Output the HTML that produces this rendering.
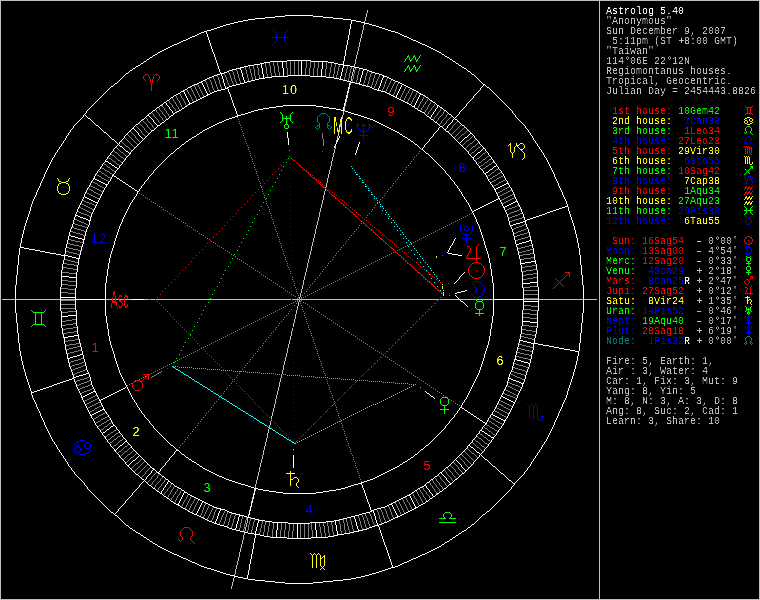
<!DOCTYPE html><html><head><meta charset="utf-8"><title>Astrolog 5.40</title><style>
html,body{margin:0;padding:0;background:#000;width:760px;height:600px;overflow:hidden}
svg{position:absolute;left:0;top:0;display:block}
.sb{position:absolute;left:606px;top:0;width:154px;height:600px;overflow:hidden;font-family:"Liberation Mono",monospace;font-size:10px;line-height:10px;color:#bfbfbf;filter:url(#th)}
.sb div{height:10px;position:relative;top:7px}
.sb span{position:absolute;top:0;white-space:pre}
.sb i{font-style:normal;position:relative;left:0.5px}
.sb b{font-weight:normal;display:inline-block;transform:scaleX(1.7)}
.h{font-family:"Liberation Sans",sans-serif;font-size:12.6px;letter-spacing:1px}
.g{font-family:"Liberation Sans",sans-serif;font-size:23.7px}
</style></head><body>
<svg width="760" height="600" viewBox="0 0 760 600" shape-rendering="crispEdges" fill="none" stroke-width="1">
<defs><filter id="th" x="0" y="0" width="100%" height="100%" color-interpolation-filters="sRGB"><feComponentTransfer><feFuncA type="linear" slope="2.5" intercept="-0.8"/></feComponentTransfer></filter><filter id="tg" x="-5%" y="-5%" width="110%" height="110%" color-interpolation-filters="sRGB"><feComponentTransfer><feFuncA type="linear" slope="5" intercept="-2.5"/></feComponentTransfer></filter><filter id="tm" x="-5%" y="-5%" width="110%" height="110%" color-interpolation-filters="sRGB"><feComponentTransfer><feFuncA type="linear" slope="6" intercept="-3.6"/></feComponentTransfer></filter></defs>
<g stroke="#ffffff"><path transform="translate(0,.5)" d="M285 15h28M275 16h10M313 16h10M265 17h10M323 17h10M255 18h10M333 18h10M248 19h7M343 19h8M243 20h5M351 20h5M238 21h5M356 21h5M234 22h4M361 22h4M230 23h4M365 23h4M226 24h4M369 24h3M223 25h3M372 25h4M220 26h3M376 26h3M217 27h3M379 27h3M214 28h3M382 28h3M211 29h3M385 29h3M207 30h4M388 30h3M204 31h3M391 31h4M201 32h3M395 32h3M199 33h2M398 33h2M197 34h2M400 34h2M195 35h2M402 35h2M192 36h3M404 36h3M190 37h2M407 37h2M188 38h2M409 38h2M186 39h2M411 39h2M183 40h3M413 40h3M181 41h2M416 41h2M179 42h2M418 42h2M177 43h2M420 43h2M174 44h3M422 44h3M172 45h2M425 45h2M170 46h2M427 46h2M168 47h2M429 47h2M166 48h2M431 48h2M164 49h2M433 49h2M162 50h2M435 50h2M160 51h2M437 51h2M158 52h2M439 52h2M155 54h2M442 54h2M153 55h2M445 56h2M150 57h2M447 57h2M147 59h2M450 59h2M287 60h24M144 61h2M270 61h17M311 61h17M453 61h2M264 62h6M328 62h6M141 63h2M260 63h4M334 63h4M456 63h2M254 64h6M338 64h6M138 65h2M248 65h6M343 65h7M459 65h2M136 66h2M244 66h4M350 66h4M240 67h4M354 67h5M462 67h2M133 68h2M236 68h5M359 68h4M464 68h2M232 69h4M363 69h4M130 70h2M229 70h3M367 70h2M227 71h2M369 71h3M468 71h2M224 72h3M372 72h3M126 73h2M220 73h4M375 73h4M217 74h3M379 74h3M472 74h2M214 75h3M288 75h22M382 75h2M212 76h2M272 76h16M310 76h16M383 76h4M209 77h3M265 77h7M326 77h8M387 77h2M207 78h2M259 78h6M334 78h5M389 78h2M205 79h2M255 79h4M339 79h4M391 79h2M203 80h2M251 80h4M343 80h4M393 80h2M201 81h2M247 81h4M347 81h4M395 81h3M199 82h3M244 82h3M350 82h5M398 82h2M115 83h2M197 83h2M240 83h4M355 83h5M400 83h2M194 84h3M236 84h4M359 84h3M402 84h2M483 84h2M192 85h2M232 85h4M362 85h4M404 85h2M111 86h2M190 86h2M229 86h3M366 86h4M406 86h2M188 87h2M227 87h2M370 87h2M408 87h2M487 87h2M225 88h3M372 88h2M410 88h2M185 89h2M221 89h4M374 89h3M412 89h2M183 90h2M217 90h4M377 90h4M414 90h2M181 91h3M214 91h3M381 91h4M416 91h2M212 92h2M385 92h2M178 93h2M210 93h2M387 93h2M419 93h2M176 94h2M207 94h3M389 94h2M420 94h3M174 95h2M206 95h2M391 95h2M423 95h2M204 96h2M393 96h2M171 97h2M202 97h2M395 97h2M426 97h2M200 98h2M397 98h2M198 99h2M399 99h2M167 100h2M196 100h2M401 100h2M430 100h2M194 101h2M403 101h2M164 102h2M192 102h2M405 102h2M433 102h2M189 103h3M407 103h2M188 104h2M409 104h2M160 105h2M283 105h33M437 105h2M185 106h2M276 106h7M316 106h7M412 106h3M157 107h2M269 107h7M323 107h6M440 107h2M182 108h2M263 108h6M329 108h7M415 108h2M258 109h5M336 109h5M153 110h2M179 110h2M254 110h4M341 110h4M418 110h2M444 110h2M177 111h2M251 111h3M345 111h3M420 111h2M175 112h2M248 112h3M348 112h3M422 112h2M149 113h2M173 113h2M245 113h3M351 113h3M241 114h4M354 114h4M449 114h2M147 115h2M171 115h2M237 115h4M358 115h3M235 116h3M361 116h3M427 116h2M232 117h3M364 117h3M429 117h2M88 118h2M229 118h3M367 118h3M142 119h2M166 119h2M226 119h3M370 119h3M431 119h2M455 119h2M224 120h2M373 120h2M222 121h2M375 121h2M162 122h2M219 122h3M377 122h2M435 122h2M217 123h2M379 123h2M136 124h2M215 124h2M381 124h2M96 125h2M157 125h3M213 125h2M383 125h2M462 125h2M211 126h2M385 126h2M440 126h2M209 127h2M387 127h2M132 128h2M207 128h2M389 128h2M205 129h2M391 129h2M444 129h2M152 130h2M203 130h2M393 130h2M395 131h2M446 131h2M104 132h2M200 132h2M397 132h2M470 133h2M197 134h2M400 134h2M194 136h2M403 136h2M192 137h2M405 137h2M465 137h2M112 139h2M189 139h2M408 139h2M186 141h2M411 141h2M182 144h2M415 144h2M120 146h2M177 148h2M483 148h2M126 151h2M478 152h2M129 153h2M171 153h2M426 153h2M472 157h2M105 161h3M109 163h2M112 165h2M494 166h2M115 167h2M117 168h2M490 169h2M486 172h2M484 173h2M112 175h2M114 176h2M93 178h2M117 178h2M95 179h2M97 180h2M120 180h2M99 181h2M101 182h2M123 182h2M103 183h2M506 183h3M105 184h3M126 184h2M504 184h2M502 185h2M129 186h2M500 186h2M498 187h2M132 188h2M496 188h2M494 189h2M135 190h2M137 191h2M85 197h2M87 198h2M498 198h2M89 199h2M496 199h2M91 200h2M494 200h2M93 201h2M492 201h2M515 201h3M95 202h3M490 202h2M513 202h2M488 203h2M511 203h2M486 204h2M509 204h2M484 205h2M507 205h2M482 206h2M505 206h2M565 206h3M480 207h2M503 207h2M562 207h3M478 208h2M559 208h3M476 209h2M556 209h3M474 210h2M553 210h3M472 211h2M550 211h3M547 212h3M545 213h2M542 214h3M75 215h3M539 215h3M78 216h2M536 216h3M80 217h3M533 217h3M83 218h3M530 218h3M86 219h2M527 219h3M88 220h3M525 220h2M523 221h3M520 222h3M516 223h4M513 224h3M510 225h3M69 235h2M71 236h4M75 237h3M78 238h4M82 239h3M529 240h3M526 241h3M522 242h4M519 243h3M516 244h3M20 247h4M24 248h5M29 249h6M35 250h5M40 251h5M45 252h5M50 253h6M448 253h4M56 254h5M452 254h6M61 255h7M458 255h4M68 256h4M72 257h4M76 258h4M531 261h5M525 262h6M520 263h5M61 276h8M69 277h8M530 282h8M522 283h8M465 290h2M461 291h4M457 292h4M455 293h2M60 297h16M75 299h31M131 299h13M493 299h31M461 301h2M523 301h16M68 315h9M61 316h7M522 321h8M530 322h8M74 335h5M68 336h6M63 337h5M519 340h4M523 341h4M527 342h4M531 343h7M538 344h5M543 345h6M549 346h5M554 347h5M559 348h5M564 349h6M570 350h5M575 351h4M80 354h3M77 355h3M73 356h4M70 357h3M67 358h3M514 359h3M517 360h4M521 361h3M524 362h4M528 363h2M86 373h3M83 374h3M79 375h4M76 376h3M73 377h3M72 378h2M508 378h3M69 379h3M511 379h2M66 380h3M513 380h3M63 381h3M516 381h3M60 382h3M519 382h2M57 383h3M521 383h3M54 384h3M52 385h2M49 386h3M46 387h3M43 388h3M123 388h2M40 389h3M121 389h2M37 390h3M119 390h2M34 391h3M93 391h3M117 391h2M31 392h3M91 392h2M115 392h2M89 393h2M113 393h2M427 393h2M87 394h2M111 394h2M85 395h2M109 395h2M83 396h2M107 396h2M431 396h2M501 396h2M81 397h2M105 397h2M503 397h2M103 398h2M505 398h2M101 399h2M507 399h2M99 400h2M509 400h2M511 401h2M513 402h2M460 407h2M462 408h2M102 409h3M100 410h2M465 410h2M98 411h2M96 412h2M468 412h2M94 413h2M92 414h2M471 414h2M491 414h2M90 415h2M493 415h2M474 416h2M495 416h2M497 417h2M477 418h2M499 418h2M501 419h2M480 420h2M503 420h3M483 422h2M485 423h2M113 425h2M111 426h2M107 429h2M480 430h2M482 431h2M103 432h2M485 433h2M488 435h2M491 437h3M125 441h2M120 445h2M171 445h2M426 445h2M468 445h2M471 447h2M421 449h2M114 450h2M176 450h3M477 452h2M182 454h2M415 454h2M186 457h2M411 457h2M189 459h2M408 459h2M485 459h2M133 460h2M192 461h2M405 461h2M194 462h2M403 462h2M197 464h2M400 464h2M127 465h2M200 466h2M397 466h2M493 466h2M395 467h2M446 467h2M152 468h2M203 468h2M393 468h2M153 469h2M205 469h2M391 469h2M207 470h2M389 470h2M465 470h2M209 471h2M387 471h2M157 472h2M211 472h2M385 472h2M440 472h2M158 473h2M213 473h2M383 473h2M462 473h2M501 473h2M136 474h2M215 474h2M381 474h2M217 475h2M379 475h2M162 476h2M219 476h3M377 476h2M435 476h2M222 477h2M375 477h2M224 478h2M373 478h2M142 479h2M166 479h2M226 479h3M370 479h3M431 479h2M455 479h2M229 480h3M367 480h3M509 480h2M168 481h2M232 481h3M364 481h3M235 482h3M361 482h3M427 482h2M171 483h2M238 483h3M358 483h4M450 483h2M513 483h2M241 484h4M354 484h4M449 484h2M149 485h2M245 485h3M351 485h3M424 485h2M175 486h2M248 486h3M348 486h3M422 486h2M177 487h2M251 487h3M345 487h3M420 487h2M153 488h2M179 488h2M254 488h4M341 488h4M418 488h2M444 488h2M258 489h5M336 489h5M182 490h2M263 490h6M329 490h7M415 490h2M157 491h2M269 491h7M323 491h6M440 491h2M184 492h3M276 492h7M316 492h7M412 492h2M160 493h2M283 493h33M437 493h2M188 494h2M409 494h2M190 495h2M407 495h3M164 496h2M192 496h2M405 496h2M433 496h2M194 497h2M403 497h2M167 498h2M196 498h2M401 498h2M430 498h2M198 499h2M399 499h2M200 500h2M397 500h2M171 501h2M202 501h2M395 501h2M426 501h2M204 502h2M393 502h2M174 503h2M206 503h2M391 503h2M423 503h2M176 504h3M208 504h2M389 504h3M421 504h2M178 505h2M210 505h2M387 505h2M419 505h2M212 506h2M385 506h2M181 507h2M214 507h3M381 507h4M415 507h3M183 508h2M217 508h4M377 508h4M414 508h2M185 509h2M220 509h5M374 509h3M412 509h2M225 510h2M371 510h3M410 510h2M188 511h2M227 511h2M370 511h2M408 511h2M487 511h2M111 512h2M190 512h2M229 512h3M366 512h4M406 512h2M192 513h2M232 513h4M362 513h4M404 513h2M194 514h3M236 514h4M359 514h3M402 514h2M483 514h2M115 515h2M197 515h2M239 515h5M355 515h4M400 515h2M199 516h2M244 516h3M351 516h4M397 516h3M201 517h2M247 517h4M347 517h4M395 517h3M203 518h2M251 518h4M343 518h4M393 518h2M205 519h2M255 519h4M339 519h4M391 519h2M207 520h2M258 520h7M334 520h5M389 520h2M209 521h3M265 521h7M326 521h8M387 521h2M212 522h2M272 522h16M310 522h16M384 522h3M214 523h3M288 523h22M382 523h2M217 524h3M379 524h3M472 524h2M126 525h2M220 525h4M375 525h4M224 526h3M372 526h3M227 527h2M369 527h3M468 527h2M130 528h2M229 528h3M367 528h2M232 529h4M363 529h4M133 530h2M236 530h4M358 530h5M464 530h2M240 531h4M354 531h5M462 531h2M136 532h2M244 532h4M350 532h4M138 533h2M248 533h6M344 533h6M459 533h2M254 534h6M337 534h7M141 535h2M260 535h4M334 535h4M456 535h2M264 536h6M328 536h6M144 537h2M270 537h17M311 537h17M453 537h2M287 538h24M147 539h2M450 539h2M150 541h2M447 541h2M445 542h2M153 543h2M155 544h2M442 544h2M158 546h2M439 546h2M160 547h2M437 547h2M162 548h2M435 548h2M164 549h2M433 549h2M166 550h2M431 550h2M168 551h2M429 551h2M170 552h2M427 552h2M172 553h2M425 553h2M174 554h3M422 554h3M177 555h2M420 555h2M179 556h2M418 556h2M181 557h2M416 557h2M183 558h3M413 558h3M186 559h2M411 559h2M188 560h2M409 560h2M190 561h2M407 561h2M192 562h3M404 562h3M195 563h2M402 563h2M197 564h2M400 564h2M199 565h2M398 565h2M201 566h3M395 566h3M204 567h3M391 567h4M207 568h4M388 568h3M211 569h3M385 569h3M214 570h3M382 570h3M217 571h3M379 571h3M220 572h3M376 572h3M223 573h3M372 573h4M226 574h4M369 574h3M230 575h4M365 575h4M234 576h4M361 576h4M238 577h5M356 577h5M243 578h5M351 578h5M248 579h7M343 579h8M255 580h10M333 580h10M265 581h10M323 581h10M275 582h10M313 582h10M285 583h28"/><path transform="translate(.5,0)" d="M15 285v28M16 275v10M16 313v10M17 265v10M17 323v10M18 255v10M18 333v10M19 248v7M19 343v8M20 243v4M20 351v5M21 238v5M21 356v5M22 234v4M22 361v4M23 230v4M23 365v4M24 226v4M24 369v3M25 223v3M25 372v4M26 220v3M26 376v3M27 217v3M27 379v3M28 214v3M28 382v3M29 211v3M29 385v3M30 207v4M30 388v3M31 204v3M31 391v1M31 393v2M32 201v3M32 395v3M33 199v2M33 398v2M34 197v2M34 400v2M35 195v2M35 402v2M36 192v3M36 404v3M37 190v2M37 407v2M38 188v2M38 409v2M39 186v2M39 411v2M40 183v3M40 413v3M41 181v2M41 416v2M42 179v2M42 418v2M43 177v2M43 420v2M44 174v3M44 422v3M45 172v2M45 425v2M46 170v2M46 427v2M47 168v2M47 429v2M48 166v2M48 431v2M49 164v2M49 433v2M50 162v2M50 435v2M51 160v2M51 437v2M52 158v2M52 439v2M53 157v1M53 441v1M54 155v2M54 442v2M55 153v2M55 444v1M56 152v1M56 445v2M57 150v2M57 447v2M58 149v1M58 449v1M59 147v2M59 450v2M60 146v1M60 287v10M60 298v13M60 452v1M61 144v2M61 270v6M61 277v10M61 311v5M61 317v11M61 453v2M62 143v1M62 264v6M62 328v6M62 455v1M63 141v2M63 260v4M63 334v3M63 456v2M64 140v1M64 254v1M64 256v4M64 338v6M64 458v1M65 138v2M65 248v6M65 344v6M65 459v2M66 136v2M66 244v4M66 350v4M66 461v1M67 135v1M67 240v4M67 354v4M67 462v2M68 133v2M68 236v4M68 359v4M68 464v2M69 132v1M69 232v3M69 363v4M69 466v1M70 130v2M70 229v3M70 367v2M70 467v1M71 129v1M71 227v2M71 369v3M71 468v2M72 128v1M72 224v3M72 372v3M72 470v1M73 126v2M73 220v4M73 375v2M73 471v1M74 125v1M74 217v3M74 379v3M74 472v2M75 124v1M75 214v1M75 216v1M75 288v9M75 298v1M75 300v10M75 382v2M75 474v1M76 123v1M76 212v2M76 272v5M76 278v10M76 310v5M76 316v10M76 384v3M76 475v1M77 122v1M77 209v3M77 265v7M77 326v8M77 387v2M77 476v1M78 121v1M78 207v2M78 259v6M78 334v1M78 336v3M78 389v2M78 477v1M79 120v1M79 205v2M79 255v3M79 339v4M79 391v2M79 478v1M80 119v1M80 203v2M80 251v4M80 343v4M80 393v2M80 479v1M81 118v1M81 201v2M81 247v4M81 347v4M81 395v2M81 480v1M82 117v1M82 199v2M82 244v3M82 351v3M82 398v2M82 481v1M83 115v2M83 197v2M83 240v4M83 355v4M83 400v2M83 482v1M84 114v1M84 194v3M84 236v3M84 359v3M84 402v2M84 483v2M85 113v1M85 115v1M85 192v2M85 232v4M85 362v4M85 404v2M85 485v1M86 111v2M86 116v1M86 190v2M86 229v3M86 366v4M86 406v2M86 486v1M87 110v1M87 117v1M87 188v2M87 227v2M87 370v2M87 408v2M87 487v2M88 109v1M88 187v1M88 225v2M88 372v1M88 410v2M88 489v1M89 108v1M89 185v2M89 221v4M89 374v3M89 412v2M89 490v1M90 107v1M90 119v1M90 183v2M90 217v3M90 377v4M90 414v1M90 491v1M91 106v1M91 120v1M91 181v2M91 214v3M91 381v4M91 416v2M91 492v1M92 105v1M92 121v1M92 180v1M92 212v2M92 385v2M92 418v1M92 493v1M93 104v1M93 122v1M93 179v1M93 210v2M93 387v2M93 419v2M93 494v1M94 103v1M94 123v1M94 176v2M94 208v2M94 389v2M94 421v2M94 495v1M95 102v1M95 124v1M95 174v2M95 206v2M95 392v1M95 423v2M95 496v1M96 101v1M96 173v1M96 204v2M96 393v2M96 425v1M96 497v1M97 100v1M97 171v2M97 203v1M97 395v2M97 426v2M97 498v1M98 99v1M98 126v1M98 170v1M98 200v2M98 397v2M98 428v1M98 499v1M99 98v1M99 127v1M99 169v1M99 198v2M99 399v1M99 429v1M99 500v1M100 97v1M100 128v1M100 167v2M100 196v2M100 401v2M100 430v2M100 501v1M101 96v1M101 129v1M101 166v1M101 194v2M101 403v2M101 432v1M101 502v1M102 95v1M102 130v1M102 164v2M102 192v2M102 405v2M102 433v2M102 503v1M103 94v1M103 131v1M103 163v1M103 190v2M103 407v2M103 435v1M103 504v1M104 93v1M104 162v1M104 188v2M104 410v1M104 436v1M104 505v1M105 92v1M105 160v1M105 187v1M105 283v16M105 300v16M105 411v1M105 431v1M105 437v2M105 506v1M106 91v1M106 133v1M106 159v1M106 185v2M106 276v7M106 316v7M106 412v2M106 430v1M106 439v1M106 507v1M107 90v1M107 134v1M107 157v2M107 269v7M107 323v6M107 414v1M107 440v2M107 508v1M108 89v1M108 135v1M108 156v1M108 162v1M108 182v2M108 263v6M108 329v7M108 415v2M108 442v1M108 509v1M109 88v1M109 136v1M109 155v1M109 181v1M109 258v5M109 336v5M109 417v1M109 428v1M109 443v1M109 510v1M110 87v1M110 137v1M110 153v2M110 179v2M110 254v4M110 341v4M110 418v2M110 427v1M110 444v2M110 511v1M111 138v1M111 152v1M111 164v1M111 177v2M111 251v3M111 345v3M111 420v2M111 446v1M112 151v1M112 176v1M112 248v3M112 348v3M112 422v2M112 447v1M113 85v1M113 149v2M113 174v1M113 245v3M113 351v3M113 424v1M113 448v1M113 513v1M114 84v1M114 140v1M114 148v1M114 166v1M114 173v1M114 241v4M114 354v4M114 449v1M114 514v1M115 141v1M115 147v1M115 171v2M115 238v3M115 358v3M115 426v1M115 451v1M115 513v1M116 142v1M116 146v1M116 170v1M116 177v1M116 235v3M116 361v3M116 427v2M116 449v1M116 452v1M116 512v1M117 82v1M117 143v1M117 145v1M117 169v1M117 232v3M117 364v3M117 429v1M117 448v1M117 453v1M117 511v1M117 516v1M118 81v1M118 144v1M118 229v3M118 367v3M118 430v1M118 447v1M118 454v1M118 509v2M118 517v1M119 80v1M119 142v2M119 145v1M119 166v2M119 179v1M119 226v3M119 370v3M119 431v2M119 446v1M119 455v2M119 508v1M119 518v1M120 79v1M120 141v1M120 165v1M120 224v2M120 373v2M120 433v1M120 457v1M120 507v1M120 519v1M121 78v1M121 140v1M121 164v1M121 222v2M121 375v2M121 434v1M121 458v1M121 506v1M121 520v1M122 77v1M122 139v1M122 147v1M122 162v2M122 181v1M122 219v3M122 377v2M122 435v2M122 444v1M122 459v1M122 505v1M122 521v1M123 76v1M123 138v1M123 148v1M123 161v1M123 217v2M123 379v2M123 437v1M123 443v1M123 460v1M123 504v1M123 522v1M124 75v1M124 136v2M124 149v1M124 160v1M124 215v2M124 381v2M124 438v1M124 442v1M124 461v1M124 503v1M124 523v1M125 74v1M125 135v1M125 150v1M125 158v2M125 183v1M125 213v2M125 383v2M125 387v1M125 439v1M125 462v2M125 501v2M125 524v1M126 134v1M126 157v1M126 211v2M126 385v2M126 440v1M126 464v1M126 500v1M127 133v1M127 156v1M127 209v2M127 387v2M127 442v1M127 499v1M128 72v1M128 132v1M128 152v1M128 155v1M128 185v1M128 207v2M128 389v2M128 443v1M128 466v1M128 498v1M128 526v1M129 71v1M129 131v1M129 154v1M129 205v2M129 391v2M129 444v1M129 464v1M129 467v1M129 497v1M129 527v1M130 130v1M130 152v1M130 203v2M130 393v2M130 445v1M130 463v1M130 468v1M130 496v1M131 129v1M131 151v1M131 187v1M131 202v1M131 395v2M131 446v2M131 462v1M131 469v1M131 495v1M132 69v1M132 150v1M132 200v2M132 397v2M132 448v1M132 461v1M132 470v1M132 493v2M132 529v1M133 127v1M133 149v1M133 199v1M133 399v1M133 449v1M133 471v1M133 492v1M134 126v1M134 129v1M134 148v1M134 189v1M134 197v2M134 400v2M134 450v1M134 472v1M134 491v1M135 67v1M135 125v1M135 130v1M135 147v1M135 196v1M135 402v1M135 451v1M135 459v1M135 473v1M135 490v1M135 531v1M136 131v1M136 146v1M136 194v2M136 403v2M136 452v1M136 458v1M136 489v1M137 132v1M137 145v1M137 192v2M137 405v2M137 453v1M137 457v1M137 488v1M138 123v1M138 133v2M138 144v1M138 407v1M138 454v1M138 456v1M138 475v1M138 487v1M139 122v1M139 135v1M139 143v1M139 189v2M139 408v2M139 455v1M139 476v1M139 485v2M140 64v1M140 121v1M140 136v1M140 142v1M140 188v1M140 410v1M140 456v1M140 477v1M140 484v1M140 534v1M141 120v1M141 137v1M141 141v1M141 186v2M141 411v2M141 457v1M141 478v1M141 483v1M142 138v1M142 140v1M142 185v1M142 413v1M142 458v1M142 482v1M143 62v1M143 139v1M143 184v1M143 414v1M143 459v1M143 481v1M143 536v1M144 118v1M144 138v1M144 182v2M144 415v2M144 460v1M144 480v1M145 117v1M145 137v1M145 181v1M145 417v1M145 461v1M145 479v1M145 481v1M146 60v1M146 116v1M146 136v1M146 180v1M146 418v1M146 462v1M146 477v2M146 482v1M146 538v1M147 135v1M147 179v1M147 419v1M147 463v1M147 476v1M147 483v1M148 114v1M148 134v1M148 177v2M148 420v1M148 464v1M148 475v1M148 484v1M149 58v1M149 116v1M149 133v1M149 176v1M149 421v2M149 465v1M149 474v1M149 540v1M150 117v1M150 132v1M150 175v1M150 423v1M150 466v1M150 473v1M151 112v1M151 118v1M151 131v1M151 174v1M151 424v1M151 467v1M151 471v2M151 486v1M152 56v1M152 111v1M152 119v1M152 173v1M152 425v1M152 470v1M152 487v1M152 542v1M153 120v2M153 171v2M153 426v2M154 122v1M154 129v1M154 170v1M154 428v1M155 109v1M155 123v1M155 128v1M155 169v1M155 429v1M155 470v1M155 489v1M156 108v1M156 124v1M156 127v1M156 168v1M156 430v1M156 471v1M156 490v1M157 53v1M157 126v1M157 167v1M157 431v1M157 545v1M158 166v1M158 432v1M159 106v1M159 165v1M159 433v1M159 471v1M159 492v1M160 124v1M160 164v1M160 434v1M160 469v2M160 474v1M161 123v1M161 163v1M161 435v1M161 468v1M161 475v1M161 491v2M162 104v1M162 162v1M162 436v1M162 467v1M162 490v1M162 494v1M163 103v1M163 161v1M163 437v1M163 466v1M163 488v2M163 495v1M164 121v1M164 160v1M164 438v1M164 465v1M164 477v1M164 487v1M165 120v1M165 159v1M165 439v1M165 463v2M165 478v1M165 485v2M166 101v1M166 103v2M166 158v1M166 440v1M166 462v1M166 484v1M166 497v1M167 105v1M167 157v1M167 441v1M167 461v1M167 482v2M168 106v1M168 118v1M168 156v1M168 442v1M168 460v1M168 480v1M169 99v1M169 107v2M169 117v1M169 155v1M169 443v1M169 458v2M169 499v1M170 98v1M170 109v1M170 116v1M170 154v1M170 444v1M170 457v1M170 482v1M170 500v1M171 110v1M171 456v1M172 111v2M172 455v1M173 96v1M173 114v1M173 152v1M173 446v1M173 454v1M173 484v1M173 502v1M174 151v1M174 447v1M174 452v2M174 485v1M175 150v1M175 448v1M175 451v1M176 149v1M176 449v1M178 503v1M179 147v1M179 451v1M179 501v2M180 92v1M180 146v1M180 452v1M180 499v2M180 506v1M181 109v1M181 145v1M181 453v1M181 489v1M181 497v2M182 495v2M183 493v2M184 92v2M184 107v1M184 143v1M184 455v1M184 491v1M185 94v2M185 142v1M185 456v1M186 96v2M187 88v1M187 98v2M187 105v1M187 493v1M187 510v1M188 100v2M188 140v1M188 458v1M189 102v1M191 138v1M191 460v1M196 135v1M196 463v1M196 513v1M197 511v2M198 509v2M199 133v1M199 465v1M199 507v2M200 505v2M201 503v2M202 83v2M202 131v1M202 467v1M202 502v1M203 85v2M204 87v2M205 89v2M206 32v2M206 91v2M207 34v3M207 93v1M208 37v3M209 40v3M210 43v3M211 46v3M212 49v3M213 52v2M214 54v3M215 57v3M215 521v2M216 60v3M216 519v2M217 63v3M217 516v3M218 66v3M218 513v3M219 69v3M219 511v2M220 72v1M220 510v1M221 74v2M222 76v3M223 79v4M224 83v3M225 86v2M228 89v3M229 92v2M230 94v3M231 97v3M232 100v3M233 103v3M234 106v2M235 108v3M235 528v1M236 111v3M236 524v4M237 114v1M237 521v3M238 517v4M239 516v1M240 69v1M241 70v3M242 73v4M243 77v3M244 80v2M247 575v3M248 515v2M248 570v5M249 511v4M249 564v6M250 507v4M250 559v5M251 503v4M251 554v5M252 499v4M252 549v5M253 495v4M253 543v6M254 491v4M254 538v5M255 489v2M255 531v3M255 535v3M256 527v4M257 523v4M258 521v2M261 64v4M262 68v6M263 74v4M276 530v7M277 523v7M282 62v6M283 68v8M287 132v6M288 138v7M293 455v13M297 524v14M301 61v14M315 523v7M316 530v7M321 69v7M322 62v7M334 146v2M335 144v2M335 521v4M336 142v2M336 525v6M337 140v2M337 531v3M338 138v2M339 136v2M340 76v3M341 72v4M342 68v4M343 61v3M343 66v2M343 107v3M344 56v5M344 103v4M345 50v6M345 99v4M346 45v5M346 95v4M347 40v5M347 91v4M348 35v5M348 87v4M349 29v6M349 83v4M350 24v5M351 21v3M354 517v2M355 153v2M355 519v3M356 150v3M356 522v4M357 147v3M357 526v3M358 144v3M358 529v1M359 82v1M359 142v2M360 78v4M361 75v3M361 484v1M362 71v4M362 485v3M363 70v1M363 488v2M364 490v3M365 493v3M366 496v3M367 499v3M368 502v2M369 504v3M370 507v3M373 511v2M374 513v3M375 516v4M376 520v3M377 523v2M378 88v2M378 526v1M379 86v2M379 527v3M380 83v3M380 530v3M381 80v3M381 533v3M382 78v2M382 536v3M383 77v1M383 539v3M384 542v3M385 545v2M386 547v3M387 550v3M388 553v3M389 556v3M390 559v3M391 562v3M392 505v2M392 565v2M393 507v2M394 509v2M395 511v2M396 95v2M396 513v2M397 93v2M397 515v1M398 91v2M399 89v2M399 133v1M399 465v1M400 87v2M401 85v2M402 135v1M402 463v1M407 138v1M407 460v1M410 140v1M410 458v1M410 496v2M411 105v1M411 493v1M411 498v2M412 500v2M413 142v1M413 456v1M413 502v2M414 105v1M414 107v1M414 143v1M414 455v1M414 491v1M414 504v2M415 103v2M415 506v1M416 101v2M417 99v2M417 109v1M417 145v1M417 453v1M417 489v1M418 92v1M418 97v2M418 146v1M418 452v1M418 506v1M419 95v2M419 147v1M419 451v1M420 148v1M420 450v1M422 148v2M423 147v1M423 150v1M423 448v1M424 113v1M424 145v2M424 151v1M424 447v1M425 96v1M425 114v1M425 144v1M425 152v1M425 391v1M425 446v1M425 484v1M425 502v1M426 115v1M426 143v1M426 392v1M426 483v1M426 486v2M427 142v1M427 488v1M428 98v1M428 141v1M428 154v1M428 444v1M428 489v1M428 500v1M429 99v1M429 139v2M429 155v1M429 394v1M429 443v1M429 481v1M429 490v2M429 499v1M430 118v1M430 138v1M430 156v1M430 395v1M430 442v1M430 480v1M430 492v1M431 115v2M431 137v1M431 157v1M431 441v1M431 493v1M432 101v1M432 114v1M432 136v1M432 158v1M432 440v1M432 494v2M432 497v1M433 112v2M433 120v1M433 134v2M433 159v1M433 397v1M433 439v1M433 478v1M434 111v1M434 121v1M434 133v1M434 160v1M434 398v1M434 438v1M434 477v1M435 103v1M435 109v2M435 132v1M435 161v1M435 437v1M435 495v1M436 104v1M436 108v1M436 131v1M436 162v1M436 436v1M436 494v1M437 106v2M437 123v1M437 130v1M437 163v1M437 435v1M437 475v1M438 124v1M438 128v2M438 164v1M438 434v1M438 474v1M439 106v1M439 125v1M439 127v1M439 165v1M439 433v1M439 473v1M439 492v1M440 166v1M440 432v1M441 53v1M441 167v1M441 431v1M441 473v1M441 545v1M442 108v1M442 127v1M442 168v1M442 430v1M442 471v1M442 474v1M442 490v1M443 109v1M443 128v1M443 169v1M443 429v1M443 470v1M443 475v1M443 489v1M444 55v1M444 170v1M444 428v1M444 469v1M444 476v1M444 543v1M445 130v1M445 171v2M445 426v2M445 468v1M445 477v1M446 111v1M446 128v1M446 173v1M446 425v1M446 478v2M446 487v1M447 112v1M447 126v2M447 174v1M447 252v1M447 424v1M447 480v1M447 486v1M448 113v1M448 125v1M448 132v1M448 175v1M448 250v2M448 423v1M448 466v1M448 481v1M448 485v1M449 58v1M449 124v1M449 133v1M449 176v1M449 248v2M449 421v2M449 465v1M449 482v1M449 540v1M450 123v1M450 134v1M450 177v2M450 246v2M450 420v1M450 464v1M451 115v1M451 122v1M451 135v1M451 179v1M451 245v1M451 419v1M451 463v1M452 60v1M452 116v1M452 120v2M452 136v1M452 180v1M452 243v2M452 418v1M452 462v1M452 482v1M452 538v1M453 117v1M453 119v1M453 137v1M453 181v1M453 241v2M453 417v1M453 461v1M453 481v1M454 118v1M454 138v1M454 182v2M454 239v2M454 283v1M454 415v2M454 460v1M454 480v1M455 62v1M455 117v1M455 139v1M455 184v1M455 238v1M455 282v1M455 295v1M455 414v1M455 459v1M455 536v1M456 116v1M456 140v1M456 185v1M456 281v1M456 296v1M456 413v1M456 458v1M456 460v1M457 115v1M457 120v1M457 141v1M457 186v2M457 280v1M457 297v1M457 411v2M457 457v1M457 461v1M457 478v1M458 64v1M458 114v1M458 121v1M458 142v1M458 188v1M458 279v1M458 298v1M458 410v1M458 456v1M458 462v1M458 477v1M458 534v1M459 112v2M459 122v1M459 143v1M459 189v2M459 277v2M459 299v1M459 408v2M459 455v1M459 463v1M459 476v1M460 111v1M460 123v1M460 142v1M460 144v1M460 191v1M460 276v1M460 300v1M460 454v1M460 464v1M460 475v1M461 66v1M461 110v1M461 124v1M461 141v1M461 145v1M461 192v2M461 275v1M461 405v2M461 453v1M461 465v2M461 474v1M461 532v1M462 109v1M462 140v1M462 146v1M462 194v2M462 274v1M462 403v2M462 452v1M462 467v1M463 108v1M463 139v1M463 147v1M463 196v1M463 273v1M463 302v1M463 402v1M463 451v1M463 468v1M464 107v1M464 126v1M464 138v1M464 148v1M464 197v2M464 272v1M464 303v1M464 400v2M464 409v1M464 450v1M464 469v1M464 472v1M465 106v1M465 127v1M465 149v1M465 199v1M465 304v1M465 399v1M465 449v1M465 471v1M466 69v1M466 104v2M466 128v1M466 150v1M466 200v2M466 305v1M466 397v2M466 448v1M466 529v1M467 70v1M467 103v1M467 129v1M467 136v1M467 151v1M467 202v1M467 306v1M467 395v2M467 411v1M467 446v2M467 469v1M467 528v1M468 102v1M468 130v1M468 135v1M468 152v2M468 203v2M468 393v2M468 468v1M469 101v1M469 131v1M469 134v1M469 154v1M469 205v2M469 391v2M469 444v1M469 467v1M470 72v1M470 100v1M470 132v1M470 155v1M470 207v2M470 389v2M470 413v1M470 443v1M470 446v1M470 466v1M470 526v1M471 73v1M471 99v1M471 156v1M471 209v2M471 387v2M471 442v1M471 465v1M471 525v1M472 98v1M472 134v1M472 212v1M472 385v2M472 440v2M472 464v1M473 96v2M473 135v1M473 158v2M473 213v2M473 383v2M473 415v1M473 439v1M473 448v1M473 462v2M474 75v1M474 95v1M474 136v2M474 156v1M474 160v1M474 215v2M474 381v2M474 438v1M474 449v1M474 461v1M474 523v1M475 76v1M475 94v1M475 138v1M475 155v1M475 161v1M475 217v2M475 379v2M475 437v1M475 450v1M475 460v1M475 522v1M476 77v1M476 93v1M476 139v1M476 154v1M476 162v2M476 219v3M476 377v2M476 417v1M476 435v2M476 451v1M476 459v1M476 521v1M477 78v1M477 92v1M477 140v1M477 153v1M477 164v1M477 222v2M477 375v2M477 434v1M477 458v1M477 520v1M478 79v1M478 91v1M478 141v1M478 165v1M478 224v2M478 373v2M478 433v1M478 457v1M478 519v1M479 80v1M479 90v1M479 142v2M479 166v2M479 226v3M479 370v3M479 419v1M479 431v2M479 453v1M479 455v2M479 518v1M480 81v1M480 88v2M480 144v1M480 151v1M480 168v1M480 229v3M480 367v3M480 454v1M480 517v1M481 82v1M481 87v1M481 145v1M481 150v1M481 169v1M481 232v3M481 364v3M481 429v1M481 453v1M481 455v1M481 516v1M482 83v1M482 86v1M482 146v1M482 149v1M482 170v1M482 235v3M482 361v3M482 421v1M482 427v2M482 452v1M482 456v1M482 515v1M483 85v1M483 147v1M483 171v2M483 238v3M483 358v3M483 426v1M483 451v1M483 457v1M484 241v4M484 354v4M484 425v1M484 432v1M484 449v2M484 458v1M485 85v1M485 149v2M485 174v1M485 245v3M485 351v3M485 424v1M485 448v1M485 513v1M486 86v1M486 151v1M486 175v2M486 248v3M486 348v3M486 422v1M486 447v1M486 512v1M487 152v1M487 177v2M487 251v3M487 345v3M487 420v2M487 434v1M487 446v1M487 460v1M488 153v2M488 171v1M488 179v2M488 254v4M488 341v4M488 418v2M488 444v2M488 461v1M489 88v1M489 155v1M489 170v1M489 181v1M489 258v5M489 336v5M489 417v1M489 443v1M489 462v1M489 510v1M490 89v1M490 156v1M490 182v2M490 263v6M490 329v7M490 415v2M490 436v1M490 442v1M490 463v1M490 509v1M491 90v1M491 157v2M491 184v1M491 269v7M491 323v6M491 440v2M491 464v1M491 508v1M492 91v1M492 159v1M492 168v1M492 185v2M492 276v7M492 316v7M492 412v2M492 439v1M492 465v1M492 507v1M493 92v1M493 160v2M493 167v1M493 187v1M493 283v16M493 300v16M493 411v1M493 438v1M493 506v1M494 93v1M494 162v1M494 188v1M494 409v2M494 436v1M494 505v1M495 94v1M495 163v1M495 190v2M495 407v2M495 435v1M495 467v1M495 504v1M496 95v1M496 164v2M496 192v2M496 405v2M496 433v2M496 468v1M496 503v1M497 96v1M497 166v1M497 194v2M497 403v2M497 432v1M497 469v1M497 502v1M498 97v1M498 167v2M498 196v2M498 401v2M498 430v2M498 470v1M498 501v1M499 98v1M499 169v1M499 199v1M499 399v2M499 429v1M499 471v1M499 500v1M500 99v1M500 170v1M500 200v2M500 397v2M500 428v1M500 472v1M500 499v1M501 100v1M501 171v2M501 202v2M501 395v1M501 426v2M501 498v1M502 101v1M502 173v1M502 204v2M502 393v2M502 425v1M502 497v1M503 102v1M503 174v2M503 206v1M503 391v2M503 423v2M503 474v1M503 496v1M504 103v1M504 176v2M504 208v2M504 389v2M504 421v2M504 475v1M504 495v1M505 104v1M505 178v2M505 210v2M505 387v2M505 419v1M505 476v1M505 494v1M506 105v1M506 180v1M506 212v2M506 385v2M506 418v1M506 477v1M506 493v1M507 106v1M507 181v2M507 214v3M507 381v4M507 416v2M507 478v1M507 492v1M508 107v1M508 184v1M508 217v4M508 377v1M508 379v2M508 414v2M508 479v1M508 491v1M509 108v1M509 185v2M509 221v4M509 374v3M509 412v2M509 490v1M510 109v1M510 187v1M510 226v1M510 372v2M510 410v2M510 489v1M511 110v1M511 188v2M511 227v2M511 370v2M511 408v2M511 481v1M511 487v2M512 111v2M512 190v2M512 229v3M512 366v4M512 406v2M512 482v1M512 486v1M513 113v1M513 192v2M513 232v4M513 362v4M513 404v2M513 485v1M514 114v1M514 194v3M514 236v4M514 360v2M514 403v1M514 484v1M515 115v2M515 197v2M515 240v4M515 355v4M515 400v2M515 482v1M516 117v1M516 199v2M516 245v2M516 351v4M516 398v2M516 481v1M517 118v1M517 202v1M517 247v4M517 347v4M517 395v3M517 480v1M518 119v1M518 203v2M518 251v4M518 343v4M518 393v2M518 479v1M519 120v1M519 205v2M519 255v4M519 339v1M519 341v2M519 391v2M519 478v1M520 121v1M520 207v2M520 259v4M520 264v1M520 334v5M520 389v2M520 477v1M521 122v1M521 209v3M521 265v7M521 326v8M521 387v2M521 476v1M522 123v1M522 212v2M522 272v11M522 284v4M522 310v11M522 322v4M522 384v3M522 475v1M523 124v1M523 214v3M523 288v11M523 300v1M523 302v8M523 382v1M523 474v1M524 125v1M524 217v3M524 379v3M524 472v2M525 126v2M525 222v2M525 375v4M525 471v1M526 128v1M526 224v3M526 372v3M526 470v1M527 129v1M527 227v2M527 369v3M527 468v2M528 130v2M528 229v3M528 367v2M528 467v1M529 132v1M529 232v4M529 364v3M529 466v1M530 133v2M530 236v4M530 359v4M530 464v2M531 135v1M531 241v3M531 354v5M531 462v2M532 136v2M532 244v4M532 350v4M532 461v1M533 138v2M533 248v6M533 344v6M533 459v2M534 140v1M534 254v6M534 338v5M534 458v1M535 141v2M535 260v1M535 262v2M535 334v4M535 456v2M536 143v1M536 264v6M536 328v6M536 455v1M537 144v2M537 270v12M537 283v4M537 311v11M537 323v5M537 453v2M538 146v1M538 287v14M538 302v9M538 452v1M539 147v2M539 450v2M540 149v1M540 449v1M541 150v2M541 447v2M542 152v1M542 445v2M543 153v2M543 444v1M544 155v2M544 442v2M545 157v1M545 441v1M546 158v2M546 439v2M547 160v2M547 437v2M548 162v2M548 435v2M549 164v2M549 433v2M550 166v2M550 431v2M551 168v2M551 429v2M552 170v2M552 427v2M553 172v2M553 425v2M554 174v3M554 422v3M555 177v2M555 420v2M556 179v2M556 418v2M557 181v2M557 416v2M558 183v3M558 413v3M559 186v2M559 411v2M560 188v2M560 409v2M561 190v2M561 407v2M562 192v3M562 404v3M563 195v2M563 402v2M564 197v2M564 400v2M565 199v2M565 398v2M566 201v3M566 395v3M567 204v2M567 391v4M568 207v4M568 388v3M569 211v3M569 385v3M570 214v3M570 382v3M571 217v3M571 379v3M572 220v3M572 376v3M573 223v3M573 372v4M574 226v4M574 369v3M575 230v4M575 365v4M576 234v4M576 361v4M577 238v5M577 356v5M578 243v5M578 352v4M579 248v7M579 343v8M580 255v10M580 333v10M581 265v10M581 323v10M582 275v10M582 313v10M583 285v28"/></g>
<g stroke="#bfbfbf"><path transform="translate(0,.5)" d="M0 0h760M2 299h13M16 299h44M61 299h14M106 299h25M144 299h5M150 299h5M156 299h135M292 299h7M300 299h139M440 299h19M460 299h15M476 299h7M484 299h9M524 299h14M539 299h44M584 299h13M0 599h760"/><path transform="translate(.5,0)" d="M0 1v598M231 586v3M232 582v4M233 578v4M234 574v2M234 577v1M235 569v5M236 565v4M237 561v4M238 557v4M239 552v5M240 548v4M241 544v4M242 540v4M243 535v5M244 531v1M244 533v2M245 527v4M246 523v4M247 518v5M248 514v1M249 510v1M250 506v1M251 501v2M252 497v2M253 493v2M254 489v2M255 484v4M256 480v4M257 476v4M258 472v4M259 467v5M260 463v4M261 459v4M262 455v4M263 450v5M264 446v4M265 442v4M266 438v4M267 433v5M268 429v4M269 425v2M269 428v1M270 421v4M271 416v3M271 420v1M272 412v4M273 408v4M274 404v4M275 399v5M276 395v4M277 391v4M278 387v4M279 382v5M280 378v4M281 375v3M282 370v4M283 365v5M284 361v4M285 357v4M286 353v4M287 348v5M288 344v4M289 340v4M290 336v4M291 331v5M292 328v3M293 323v4M294 319v4M295 314v5M296 310v4M297 306v4M298 302v4M299 297v2M299 300v2M300 293v4M301 289v4M302 285v4M303 280v5M304 276v4M305 272v4M306 268v4M307 263v5M308 259v4M309 255v4M310 251v4M311 246v5M312 242v4M313 238v4M314 234v4M315 229v5M316 225v4M317 221v4M318 217v4M319 212v5M320 208v4M321 204v4M322 200v4M323 195v5M324 191v4M325 187v1M325 189v2M326 183v4M327 178v5M328 174v4M329 170v4M330 166v4M331 161v5M332 157v4M333 154v3M334 149v4M335 146v3M336 140v2M337 136v4M338 132v4M339 127v5M340 123v4M341 119v4M342 115v4M343 111v4M344 107v3M345 103v3M346 99v3M347 95v3M348 91v2M349 87v2M350 83v2M351 76v5M352 72v4M353 68v4M354 64v3M355 59v5M356 55v4M357 51v4M358 47v4M359 42v5M360 38v4M361 34v4M362 30v4M363 25v5M364 21v1M364 23v2M365 17v4M366 13v4M367 10v3M599 1v598M759 1v598"/></g>
<g stroke="#7f7f7f"><path transform="translate(0,.5)" d="M462 134h2M467 140h2M470 143h2M126 146h2M473 146h2M478 147h2M115 152h2M121 152h2M472 152h2M483 153h2M112 155h2M487 156h2M121 157h2M109 158h2M477 158h2M483 159h2M489 159h2M118 160h2M113 161h2M479 162h2M485 162h2M492 162h2M104 164h2M117 164h2M489 164h2M481 165h2M486 166h2M108 167h2M102 168h2M483 168h2M496 169h2M105 170h2M112 170h2M99 171h2M107 171h2M492 172h2M102 173h2M110 173h2M498 173h2M97 175h2M105 175h2M488 175h2M495 175h2M99 176h2M493 176h2M501 176h2M108 177h2M499 177h2M102 178h2M490 178h2M497 178h2M104 179h2M106 180h2M494 180h2M503 180h2M492 181h2M501 181h2M93 182h2M499 182h2M95 183h2M496 184h2M98 185h2M494 185h2M91 186h2M100 186h2M93 187h2M102 187h2M507 187h2M95 188h2M505 188h2M89 189h2M97 189h2M503 189h2M91 190h2M99 190h2M510 190h2M101 191h2M500 191h2M508 191h2M94 192h2M498 192h2M506 192h2M87 193h2M96 193h2M504 193h2M89 194h2M98 194h2M502 194h2M512 194h2M91 195h2M500 195h2M510 195h2M93 196h2M508 196h2M95 197h2M506 197h2M97 198h2M504 198h2M512 198h2M502 199h2M510 199h2M508 200h2M84 201h2M506 201h2M86 202h3M504 202h2M89 203h3M502 203h2M82 204h2M92 204h2M84 205h2M94 205h2M517 205h2M86 206h2M515 206h2M79 207h2M88 207h2M512 207h3M81 208h2M90 208h2M509 208h3M83 209h2M92 209h2M507 209h2M519 209h2M85 210h2M517 210h2M87 211h2M514 211h3M79 212h2M89 212h2M511 212h3M81 213h3M509 213h2M520 213h2M84 214h3M518 214h2M87 215h2M515 215h3M89 216h2M512 216h3M510 217h2M522 217h2M519 218h3M75 219h2M515 219h4M77 220h2M512 220h3M79 221h2M510 221h2M81 222h3M84 223h2M75 224h3M86 224h2M524 224h2M78 225h4M522 225h2M82 226h3M519 226h3M72 227h2M85 227h2M516 227h3M74 228h3M514 228h2M77 229h4M524 229h2M81 230h3M521 230h3M71 231h2M84 231h2M518 231h3M73 232h3M516 232h2M527 232h2M76 233h4M514 233h2M524 233h3M80 234h3M520 234h4M83 235h2M517 235h3M515 236h2M528 236h2M525 237h3M521 238h4M69 239h2M518 239h3M71 240h4M516 240h2M75 241h5M80 242h3M68 243h2M70 244h4M74 245h5M529 245h3M79 246h3M525 246h4M67 247h2M521 247h4M69 248h4M518 248h3M73 249h5M530 249h3M78 250h3M526 250h4M66 251h3M522 251h4M69 252h4M519 252h3M73 253h4M530 253h3M77 254h3M523 254h7M520 255h3M531 257h3M524 258h7M65 259h2M521 259h3M67 260h4M71 261h4M75 262h3M64 263h3M67 264h7M74 265h3M532 265h4M525 266h7M63 267h4M522 267h3M67 268h6M73 269h4M533 269h3M526 270h7M522 271h4M62 272h7M69 273h7M533 273h4M526 274h7M523 275h3M533 277h4M527 278h6M523 279h4M62 280h6M68 281h8M62 284h6M68 285h8M530 286h7M523 287h7M61 288h7M68 289h7M524 290h14M61 292h7M68 293h7M524 294h14M524 298h14M61 300h14M61 304h14M524 305h7M531 306h7M61 308h14M524 309h7M531 310h7M68 311h8M62 312h6M523 313h7M530 314h7M523 317h7M530 318h7M72 319h4M66 320h6M62 321h4M73 323h3M66 324h7M62 325h4M523 325h6M529 326h8M73 327h4M66 328h7M63 329h3M522 329h4M526 330h6M74 331h3M532 331h4M67 332h7M63 333h4M522 333h3M525 334h7M532 335h3M521 336h3M524 337h4M528 338h4M75 339h4M532 339h2M68 340h7M65 341h3M76 343h4M69 344h7M519 344h3M66 345h3M522 345h4M77 346h3M526 346h4M73 347h4M530 347h3M69 348h4M518 348h3M66 349h3M521 349h4M78 350h3M525 350h5M74 351h4M530 351h2M70 352h4M517 352h3M67 353h3M520 353h4M524 354h5M529 355h2M516 356h3M519 357h4M81 358h2M523 358h5M78 359h3M528 359h2M74 360h4M71 361h3M69 362h2M82 362h2M79 363h3M514 363h2M75 364h4M516 364h3M72 365h3M83 365h2M519 365h4M70 366h2M81 366h2M523 366h3M78 367h3M513 367h2M526 367h2M75 368h3M515 368h3M73 369h2M518 369h4M83 370h2M522 370h3M80 371h3M512 371h2M525 371h2M77 372h3M159 372h2M514 372h3M75 373h2M157 373h2M517 373h4M73 374h2M511 374h2M521 374h3M154 375h2M513 375h2M152 376h2M515 376h2M87 377h2M517 377h3M84 378h3M520 378h2M80 379h4M522 379h2M77 380h3M75 381h2M87 381h2M84 382h3M508 382h2M81 383h3M510 383h2M79 384h2M512 384h3M77 385h2M88 385h2M515 385h3M85 386h3M508 386h2M518 386h2M82 387h3M510 387h2M80 388h2M512 388h2M90 389h2M514 389h2M87 390h3M506 390h2M516 390h2M84 391h3M508 391h2M82 392h2M510 392h2M503 393h2M512 393h2M505 394h2M514 394h2M95 395h2M507 395h3M93 396h2M510 396h3M91 397h2M513 397h2M89 398h2M87 399h2M95 399h2M85 400h2M93 400h2M91 401h2M501 401h2M89 402h2M98 402h2M503 402h2M87 403h2M96 403h2M505 403h2M94 404h2M499 404h2M507 404h2M92 405h2M501 405h2M509 405h2M90 406h2M99 406h2M88 407h2M97 407h2M504 407h2M95 408h2M497 408h2M506 408h2M499 409h2M508 409h2M92 410h2M501 410h2M90 411h2M495 411h2M503 411h2M497 412h2M505 412h2M103 413h2M507 413h2M101 414h2M500 414h2M99 415h2M502 415h2M504 416h2M96 417h2M105 417h2M94 418h2M103 418h2M491 418h2M101 419h2M493 419h2M107 420h2M98 421h2M489 421h2M496 421h2M96 422h2M104 422h2M498 422h2M102 423h2M109 423h2M492 423h2M500 423h2M99 425h2M487 425h2M495 425h2M105 426h2M490 427h2M498 427h2M485 428h2M492 428h2M101 429h2M114 430h2M495 430h2M489 431h2M111 432h2M116 433h2M108 434h2M480 434h2M493 434h2M105 436h2M112 436h2M118 436h2M484 437h2M479 438h2M108 439h2M114 439h2M120 440h2M488 440h2M476 441h2M110 442h2M485 443h2M114 445h2M125 446h2M482 446h2M477 447h2M119 451h2M125 451h2M472 453h2M128 454h2M131 457h2M136 463h2"/><path transform="translate(.5,0)" d="M72 370v1M74 223v1M78 211v1M79 389v1M81 203v1M81 393v1M83 200v1M84 401v1M85 369v1M86 192v1M86 404v1M88 188v1M89 380v1M90 185v1M90 384v1M91 213v1M92 181v1M92 388v1M93 191v1M94 409v1M96 174v1M97 184v1M97 398v1M98 416v1M98 426v1M100 195v1M100 420v1M101 167v1M101 172v1M101 177v1M101 405v1M101 424v1M103 428v1M104 169v1M104 174v1M104 427v1M104 437v1M105 412v1M106 165v1M106 421v1M107 166v1M107 176v1M107 416v1M107 425v1M107 435v1M108 157v1M108 181v1M108 424v1M109 172v1M109 419v1M110 168v1M110 178v1M110 433v1M110 438v1M111 154v1M111 159v1M111 169v1M111 422v1M111 437v1M112 160v1M112 174v1M112 441v1M113 431v1M113 440v1M113 446v1M114 151v1M114 156v1M114 171v1M114 435v1M115 157v1M115 162v1M115 434v1M116 147v1M116 158v1M116 163v1M116 429v1M116 438v1M116 444v1M117 148v1M117 153v1M117 159v1M117 437v1M117 443v1M118 149v1M118 154v1M118 432v1M118 442v1M118 452v1M119 150v1M119 155v1M119 165v1M119 441v1M120 151v1M120 156v1M120 161v1M120 435v1M120 456v1M121 141v1M121 162v1M121 450v1M121 455v1M122 142v1M122 439v1M122 449v1M122 454v1M123 143v1M123 153v1M123 158v1M123 438v1M123 448v1M123 453v1M123 459v1M124 144v1M124 154v1M124 159v1M124 447v1M124 452v1M124 458v1M125 138v1M125 145v1M125 155v1M125 457v1M126 139v1M126 156v1M126 456v1M126 462v1M127 134v1M127 140v1M127 385v1M127 445v1M127 450v1M127 455v1M127 461v1M128 135v1M128 141v1M128 147v1M128 444v1M128 449v1M128 460v1M129 136v1M129 142v1M129 148v1M129 384v1M129 448v1M129 459v1M130 131v1M130 137v1M130 143v1M130 149v1M130 447v1M130 453v1M130 458v1M131 132v1M131 138v1M131 144v1M131 150v1M131 383v1M131 452v1M131 468v1M132 133v1M132 139v1M132 145v1M132 451v1M132 467v1M133 134v1M133 140v1M133 146v1M133 450v1M133 456v1M133 466v1M134 135v1M134 141v1M134 147v1M134 455v1M134 465v1M134 471v1M135 136v2M135 142v1M135 381v1M135 454v1M135 464v1M135 470v1M136 126v1M136 138v1M136 143v1M136 453v1M136 469v1M137 127v1M137 139v1M137 144v1M137 468v1M138 128v1M138 140v1M138 462v1M138 467v1M138 473v1M139 123v1M139 129v1M139 141v1M139 193v1M139 379v1M139 461v1M139 466v1M139 472v1M140 124v1M140 130v1M140 460v1M140 465v1M140 471v1M141 125v1M141 131v2M141 194v1M141 378v1M141 459v1M141 464v1M141 470v1M141 477v1M142 120v1M142 126v1M142 133v1M142 463v1M142 469v1M142 476v1M143 121v1M143 127v1M143 134v1M143 195v1M143 377v1M143 462v1M143 468v1M143 475v1M144 122v1M144 128v2M144 135v1M144 461v1M144 467v1M144 474v1M145 123v1M145 130v1M145 136v1M145 197v1M145 376v1M145 466v1M145 472v2M146 118v1M146 124v1M146 131v1M146 465v1M146 471v1M147 119v2M147 125v2M147 132v1M147 198v1M147 464v1M147 470v1M147 482v1M148 121v1M148 127v1M148 133v1M148 469v1M148 481v1M149 122v1M149 128v1M149 199v1M149 374v1M149 468v1M149 480v1M150 123v1M150 129v1M150 467v1M150 479v1M151 124v1M151 130v1M151 201v1M151 373v1M151 377v1M151 477v2M151 484v1M152 113v1M152 125v2M152 476v1M152 482v2M153 114v2M153 127v1M153 202v1M153 372v1M153 475v1M153 481v1M154 116v1M154 128v1M154 474v1M154 480v1M154 487v1M155 117v1M155 203v1M155 371v1M155 473v1M155 479v1M155 485v2M156 110v2M156 118v1M156 374v1M156 472v1M156 478v1M156 484v1M157 112v1M157 119v1M157 205v1M157 370v1M157 476v2M157 483v1M157 490v1M158 113v1M158 120v2M158 475v1M158 482v1M158 488v2M159 108v2M159 114v2M159 122v1M159 206v1M159 369v1M159 474v1M159 481v1M159 487v1M160 110v1M160 116v1M160 123v1M160 479v2M160 486v1M161 104v1M161 111v1M161 117v1M161 207v1M161 368v1M161 371v1M161 478v1M161 484v2M162 105v2M162 112v2M162 118v2M162 477v1M162 483v1M163 107v1M163 114v1M163 120v1M163 209v1M163 367v1M163 482v1M164 108v2M164 115v1M164 480v2M164 493v2M165 110v1M165 116v2M165 210v1M165 366v1M165 479v1M165 492v1M166 111v2M166 118v1M166 491v1M167 113v1M167 211v1M167 365v1M167 489v2M167 497v1M168 114v2M168 488v1M168 495v2M169 101v2M169 116v1M169 213v1M169 364v1M169 487v1M169 494v1M170 103v1M170 485v2M170 492v2M171 104v1M171 214v1M171 363v1M171 484v1M171 490v2M171 498v2M172 98v1M172 105v2M172 489v1M172 497v1M173 99v2M173 107v1M173 215v1M173 362v1M173 487v2M173 495v2M174 101v1M174 108v1M174 486v1M174 494v1M174 502v1M175 102v2M175 109v2M175 217v1M175 361v1M175 492v2M175 500v2M176 96v2M176 104v2M176 111v1M176 491v1M176 498v2M177 98v2M177 106v1M177 218v1M177 360v1M177 449v1M177 489v2M177 496v2M178 100v1M178 107v2M178 488v1M178 495v1M179 101v2M179 109v1M179 219v1M179 359v1M179 447v1M179 493v2M180 94v2M180 103v2M180 445v1M180 491v2M181 96v2M181 105v2M181 221v1M181 358v1M181 490v1M181 506v1M182 98v1M182 107v1M182 443v1M182 504v2M183 99v2M183 222v1M183 357v1M183 502v2M184 101v2M184 441v1M184 500v2M185 103v2M185 223v1M185 356v1M185 439v1M185 499v1M185 507v2M186 105v1M186 497v2M186 505v2M187 90v2M187 225v1M187 355v1M187 437v1M187 495v2M187 503v2M188 92v2M188 435v1M188 501v2M188 510v1M189 94v1M189 226v1M189 354v1M189 499v2M189 508v2M190 87v1M190 95v2M190 433v1M190 497v2M190 506v2M191 88v2M191 97v2M191 227v1M191 353v1M191 496v1M191 504v2M192 90v2M192 99v2M192 431v1M192 503v1M192 511v2M193 92v2M193 101v1M193 229v1M193 352v1M193 429v1M193 501v2M193 509v2M194 85v2M194 94v2M194 499v2M194 507v2M195 87v2M195 96v2M195 230v1M195 351v1M195 427v1M195 498v1M195 505v2M196 89v2M196 98v2M196 503v2M197 84v1M197 91v2M197 231v1M197 350v1M197 425v1M197 501v2M198 85v2M198 93v2M198 423v1M198 500v1M199 87v2M199 95v2M199 233v1M199 349v1M200 89v2M200 97v1M200 421v1M200 515v1M201 91v2M201 234v1M201 348v1M201 419v1M201 513v2M202 93v2M202 510v3M203 95v2M203 235v1M203 347v1M203 417v1M203 507v3M203 516v2M204 505v2M204 514v2M205 80v2M205 237v1M205 346v1M205 415v1M205 503v2M205 512v2M206 82v2M206 413v1M206 510v2M207 84v3M207 238v1M207 345v1M207 508v2M207 518v2M208 87v3M208 411v1M208 506v2M208 516v2M209 78v2M209 90v2M209 239v1M209 344v1M209 505v1M209 514v2M210 80v2M210 92v1M210 409v1M210 512v2M211 82v3M211 241v1M211 343v1M211 407v1M211 510v2M211 520v1M212 85v3M212 508v2M212 518v2M213 77v2M213 88v2M213 242v1M213 342v1M213 405v1M213 507v1M213 515v3M214 79v2M214 90v1M214 403v1M214 512v3M215 81v3M215 243v1M215 341v1M215 510v2M216 84v3M216 401v1M216 508v2M217 75v2M217 87v2M217 245v1M217 340v1M218 77v3M218 89v1M218 399v1M219 80v4M219 246v1M219 339v1M219 397v1M219 522v2M220 84v3M220 520v2M221 87v2M221 247v1M221 338v1M221 395v1M221 517v3M222 515v2M223 248v1M223 337v1M223 393v1M223 513v2M223 524v1M224 73v2M224 391v1M224 511v2M224 521v3M225 75v2M225 250v1M225 336v1M225 517v4M226 77v3M226 389v1M226 514v3M227 80v3M227 251v1M227 335v1M227 387v1M227 512v2M227 525v2M228 72v1M228 83v2M228 522v3M229 73v2M229 85v1M229 252v1M229 334v1M229 385v1M229 518v4M230 75v3M230 515v3M231 78v3M231 254v1M231 333v1M231 383v1M231 513v2M231 526v2M232 70v2M232 81v2M232 381v1M232 523v3M233 72v3M233 83v2M233 255v1M233 332v1M233 519v4M234 75v4M234 379v1M234 516v3M235 79v3M235 256v1M235 331v1M235 514v2M236 69v2M236 82v2M236 377v1M237 71v3M237 117v1M237 258v1M237 330v1M237 375v1M238 74v4M238 119v1M239 78v3M239 121v1M239 123v1M239 259v1M239 329v1M239 373v1M239 528v2M240 81v2M240 125v1M240 371v1M240 523v5M241 127v1M241 129v1M241 260v1M241 328v1M241 519v4M242 131v1M242 369v1M242 516v3M243 133v1M243 135v1M243 262v1M243 327v1M243 529v2M244 137v1M244 367v1M244 524v5M245 67v3M245 139v1M245 141v1M245 263v1M245 326v1M245 365v1M245 520v4M246 70v4M246 143v1M246 517v3M247 74v4M247 145v1M247 264v1M247 325v1M247 363v1M247 530v2M248 78v3M248 147v1M248 149v1M248 525v5M249 66v3M249 151v1M249 266v1M249 324v1M249 361v1M249 521v4M250 69v4M250 153v1M250 155v1M250 359v1M250 518v3M251 73v4M251 157v1M251 267v1M251 323v1M251 530v3M252 77v3M252 159v1M252 161v1M252 357v1M252 526v4M253 66v3M253 163v1M253 268v1M253 322v1M253 355v1M253 522v4M254 69v7M254 165v1M254 167v1M254 519v3M255 76v3M255 169v1M255 270v1M255 321v1M255 353v1M256 171v1M256 173v1M257 65v3M257 175v1M257 271v1M257 320v1M257 351v1M258 68v7M258 177v1M258 179v1M258 349v1M259 75v3M259 181v1M259 272v1M259 319v1M259 532v2M260 183v1M260 185v1M260 347v1M260 528v4M261 187v1M261 274v1M261 318v1M261 524v4M262 189v1M262 191v1M262 345v1M262 521v3M263 193v1M263 275v1M263 317v1M263 343v1M263 532v3M264 195v1M264 197v1M264 525v7M265 63v4M265 199v1M265 276v1M265 316v1M265 341v1M265 522v3M266 67v7M266 201v1M266 203v1M266 339v1M267 74v3M267 205v1M267 278v1M267 315v1M267 532v4M268 207v1M268 337v1M268 526v6M269 63v3M269 209v1M269 211v1M269 279v1M269 314v1M269 522v4M270 66v7M270 213v1M270 335v1M271 73v4M271 215v1M271 217v1M271 280v1M271 313v1M271 333v1M272 219v1M272 529v8M273 62v4M273 221v1M273 223v1M273 282v1M273 312v1M273 331v1M273 523v6M274 66v7M274 225v1M275 73v3M275 227v1M275 229v1M275 283v1M275 311v1M275 329v1M276 231v1M276 327v1M277 62v4M277 233v1M277 235v1M277 284v1M277 310v1M278 66v6M278 237v1M278 325v1M279 72v4M279 239v1M279 241v1M279 286v1M279 309v1M279 323v1M280 243v1M280 530v7M281 245v1M281 247v1M281 287v1M281 308v1M281 321v1M281 523v7M282 249v1M283 251v1M283 253v1M283 288v1M283 307v1M283 319v1M284 255v1M284 317v1M284 530v7M285 257v1M285 259v1M285 290v1M285 306v1M285 523v7M286 62v6M286 261v1M286 315v1M287 68v8M287 263v1M287 265v1M287 291v1M287 305v1M288 267v1M288 313v1M288 531v7M289 269v1M289 292v1M289 304v1M289 311v1M289 524v7M290 61v14M290 271v1M290 273v1M291 294v1M291 303v1M291 309v1M292 277v1M292 279v1M292 531v7M293 281v1M293 295v1M293 302v1M293 524v7M294 61v14M294 283v1M294 285v1M294 305v1M295 287v1M295 296v1M295 301v1M296 289v1M296 291v1M296 303v1M297 293v1M297 298v1M297 300v2M298 61v14M298 295v1M298 297v1M299 299v1M300 301v1M300 303v1M300 524v14M301 297v2M301 300v1M301 305v1M302 295v1M302 307v1M302 309v1M303 297v1M303 302v1M303 311v1M304 293v1M304 313v1M304 315v1M304 524v14M305 68v7M305 296v1M305 303v1M305 317v1M306 61v7M306 291v1M306 319v1M306 321v1M307 289v1M307 295v1M307 304v1M307 323v1M308 325v1M308 327v1M308 524v14M309 68v7M309 287v1M309 294v1M309 306v1M309 329v1M310 61v7M310 285v1M310 331v1M311 293v1M311 307v1M311 333v1M311 335v1M311 523v7M312 283v1M312 337v1M312 530v7M313 68v8M313 292v1M313 308v1M313 339v1M313 341v1M314 62v6M314 281v1M314 343v1M315 279v1M315 291v1M315 310v1M315 345v1M315 347v1M316 349v1M317 68v8M317 277v1M317 290v1M317 311v1M317 351v1M317 353v1M318 62v6M318 355v1M319 275v1M319 289v1M319 312v1M319 357v1M319 359v1M319 523v4M320 273v1M320 361v1M320 527v6M321 288v1M321 314v1M321 363v1M321 365v1M321 533v4M322 133v6M322 271v1M322 367v1M323 139v7M323 269v1M323 287v1M323 315v1M323 369v1M323 371v1M323 523v3M324 373v1M324 526v7M325 69v7M325 267v1M325 286v1M325 316v1M325 375v1M325 533v4M326 62v7M326 379v1M327 265v1M327 285v1M327 318v1M327 381v1M327 383v1M327 522v4M328 263v1M328 385v1M328 526v7M329 73v4M329 284v1M329 319v1M329 387v1M329 389v1M329 533v3M330 67v6M330 261v1M330 391v1M331 63v4M331 283v1M331 320v1M331 393v1M331 522v3M332 259v1M332 395v1M332 397v1M332 525v7M333 74v3M333 257v1M333 282v1M333 322v1M333 399v1M333 532v4M334 67v7M334 401v1M334 403v1M335 64v3M335 255v1M335 281v1M335 323v1M335 405v1M336 75v3M336 253v1M336 407v1M336 409v1M337 71v4M337 280v1M337 324v1M337 411v1M338 67v4M338 251v1M338 413v1M338 415v1M339 65v2M339 279v1M339 326v1M339 417v1M339 520v4M340 249v1M340 419v1M340 421v1M340 524v7M341 247v1M341 278v1M341 327v1M341 423v1M341 531v3M342 425v1M342 427v1M343 245v1M343 277v1M343 328v1M343 429v1M343 519v4M344 77v3M344 431v1M344 433v1M344 523v7M345 73v4M345 243v1M345 276v1M345 330v1M345 435v1M345 530v3M346 69v4M346 241v1M346 437v1M346 439v1M346 519v3M347 66v3M347 275v1M347 331v1M347 441v1M347 522v4M348 78v3M348 239v1M348 443v1M348 445v1M348 526v4M349 73v5M349 237v1M349 274v1M349 332v1M349 447v1M349 530v3M350 69v4M350 449v1M350 451v1M350 518v3M351 67v2M351 235v1M351 273v1M351 334v1M351 453v1M351 521v4M352 79v3M352 455v1M352 525v4M353 74v5M353 233v1M353 272v1M353 335v1M353 457v1M353 459v1M353 529v3M354 70v4M354 231v1M354 461v1M355 68v2M355 271v1M355 336v1M355 463v1M355 465v1M356 80v3M356 229v1M356 467v1M357 75v5M357 270v1M357 338v1M357 469v1M357 471v1M358 71v4M358 227v1M358 473v1M358 516v2M359 69v2M359 225v1M359 269v1M359 339v1M359 475v1M359 477v1M359 518v3M360 479v1M360 521v4M361 223v1M361 268v1M361 340v1M361 481v1M361 525v3M362 515v2M362 528v2M363 83v2M363 267v1M363 342v1M363 517v3M364 80v3M364 520v4M365 76v4M365 266v1M365 343v1M365 514v2M365 524v3M366 73v3M366 217v1M366 516v2M366 527v2M367 71v2M367 84v2M367 215v1M367 265v1M367 344v1M367 518v3M368 81v3M368 521v3M369 77v4M369 213v1M369 264v1M369 346v1M369 513v1M369 524v2M370 74v3M370 514v2M370 526v1M371 72v2M371 85v2M371 211v1M371 263v1M371 347v1M371 516v3M372 82v3M372 209v1M372 519v3M373 78v4M373 262v1M373 348v1M373 522v2M374 75v3M374 86v2M374 207v1M374 524v2M375 74v1M375 84v2M375 205v1M375 261v1M375 350v1M376 81v3M377 79v2M377 203v1M377 260v1M377 351v1M377 510v2M378 77v2M378 512v3M379 75v2M379 201v1M379 259v1M379 352v1M379 515v4M380 199v1M380 509v1M380 519v3M381 258v1M381 353v1M381 510v2M381 522v2M382 89v2M382 197v1M382 512v3M383 87v2M383 257v1M383 515v3M384 84v3M384 195v1M384 508v1M384 518v2M385 81v3M385 91v1M385 193v1M385 256v1M385 356v1M385 509v2M385 520v2M386 79v2M386 89v2M386 511v3M387 78v1M387 87v2M387 191v1M387 255v1M387 357v1M387 514v3M388 85v2M388 189v1M388 506v1M388 517v2M389 83v2M389 92v2M389 254v1M389 359v1M389 507v2M389 519v1M390 81v2M390 90v2M390 187v1M390 509v3M391 80v1M391 88v2M391 253v1M391 360v1M391 512v3M392 86v2M392 185v1M392 515v2M393 84v2M393 94v2M393 183v1M393 252v1M393 361v1M393 517v1M394 82v2M394 92v2M395 89v3M395 181v1M395 363v1M395 502v2M396 86v3M396 504v2M397 84v2M397 179v1M397 250v1M397 364v1M397 506v2M398 83v1M398 177v1M398 501v1M398 508v2M399 249v1M399 365v1M399 502v2M399 510v2M400 97v2M400 175v1M400 504v2M400 512v2M401 95v2M401 173v1M401 248v1M401 367v1M401 506v2M401 514v1M402 93v2M402 499v1M402 508v2M403 91v2M403 100v1M403 171v1M403 247v1M403 368v1M403 500v2M403 510v2M404 89v2M404 98v2M404 502v2M404 512v1M405 87v2M405 96v2M405 169v1M405 246v1M405 369v1M405 497v1M405 504v2M406 94v2M406 167v1M406 498v2M406 506v2M407 93v1M407 101v2M407 245v1M407 371v1M407 500v2M407 508v2M408 91v2M408 99v2M408 165v1M408 502v1M408 510v1M409 89v2M409 97v2M409 244v1M409 372v1M409 503v2M410 95v2M410 163v1M410 505v2M411 93v2M411 102v2M411 161v1M411 243v1M411 373v1M411 507v2M412 91v2M412 100v2M412 493v1M413 90v1M413 98v2M413 159v1M413 242v1M413 375v1M413 494v2M414 97v1M414 157v1M414 496v2M415 95v2M415 241v1M415 376v1M415 498v1M416 93v2M416 155v1M416 491v1M416 499v2M417 92v1M417 108v1M417 240v1M417 377v1M417 492v2M417 501v2M418 106v2M418 153v1M418 494v2M418 503v2M419 104v2M419 151v1M419 239v1M419 379v1M419 489v1M419 496v1M420 102v2M420 110v1M420 490v2M420 497v2M421 101v1M421 108v2M421 149v1M421 238v1M421 380v1M421 492v1M421 499v2M422 99v2M422 107v1M422 487v1M422 493v2M422 501v2M423 97v2M423 105v2M423 237v1M423 381v1M423 488v2M423 495v2M424 96v1M424 104v1M424 112v1M424 490v1M424 497v1M425 102v2M425 110v2M425 236v1M425 383v1M425 491v1M425 498v2M426 101v1M426 109v1M426 492v2M426 500v1M427 99v2M427 107v2M427 114v1M427 235v1M427 384v1M427 494v1M428 105v2M428 112v2M428 495v1M429 104v1M429 111v1M429 234v1M429 385v1M429 482v1M429 496v2M430 102v2M430 110v1M430 483v2M431 101v1M431 108v2M431 233v1M431 387v1M431 485v1M432 107v1M432 480v1M432 486v2M433 106v1M433 119v1M433 232v1M433 388v1M433 481v2M433 488v1M434 104v2M434 117v2M434 483v1M434 489v2M435 116v1M435 231v1M435 389v1M435 478v1M435 484v1M435 491v1M436 115v1M436 121v1M436 479v2M436 485v2M436 492v2M437 113v2M437 120v1M437 230v1M437 391v1M437 481v1M437 487v1M437 494v1M438 112v1M438 118v2M438 475v1M438 482v1M438 488v1M439 111v1M439 117v1M439 124v1M439 229v1M439 392v1M439 476v1M439 483v2M439 489v2M440 109v2M440 116v1M440 123v1M440 477v2M440 485v1M441 108v1M441 115v1M441 121v2M441 228v1M441 393v1M441 479v1M441 486v1M442 114v1M442 120v1M442 126v1M442 480v1M442 487v2M443 112v2M443 119v1M443 125v1M443 227v1M443 395v1M443 481v1M444 111v1M444 118v1M444 124v1M444 470v1M444 482v1M445 117v1M445 123v1M445 226v1M445 396v1M445 471v1M445 483v2M446 115v2M446 121v2M446 472v2M446 485v1M447 114v1M447 120v1M447 225v1M447 397v1M447 468v1M447 474v1M448 119v1M448 131v1M448 469v1M448 475v1M449 118v1M449 130v1M449 224v1M449 399v1M449 470v1M449 476v1M450 117v1M450 129v1M450 465v1M450 471v1M450 477v1M451 116v1M451 128v1M451 134v1M451 223v1M451 400v1M451 466v1M451 472v1M451 478v2M452 126v2M452 133v1M452 467v1M452 473v2M452 480v1M453 125v1M453 132v1M453 222v1M453 401v1M453 462v1M453 468v1M453 475v1M454 124v1M454 131v1M454 137v1M454 463v1M454 469v1M454 476v1M455 123v1M455 130v1M455 136v1M455 221v1M455 403v1M455 464v1M455 470v2M455 477v1M456 122v1M456 129v1M456 135v1M456 465v1M456 472v1M456 478v1M457 121v1M457 128v1M457 134v1M457 139v1M457 220v1M457 404v1M457 466v1M457 473v1M458 127v1M458 133v1M458 138v1M458 467v2M458 474v1M459 126v1M459 132v1M459 137v1M459 219v1M459 405v1M459 457v1M459 469v1M459 475v1M460 125v1M460 131v1M460 136v1M460 458v1M460 470v1M461 130v1M461 135v1M461 218v1M461 454v1M461 459v1M461 471v1M462 129v1M462 145v1M462 455v1M462 460v1M462 472v1M463 128v1M463 144v1M463 217v1M463 456v1M463 461v1M464 127v1M464 133v1M464 143v1M464 451v1M464 457v1M464 462v2M465 132v1M465 142v1M465 148v1M465 216v1M465 452v1M465 458v1M465 464v1M466 131v1M466 141v1M466 147v1M466 453v1M466 459v1M466 465v1M467 130v1M467 146v1M467 215v1M467 448v1M467 454v1M467 460v1M467 466v1M468 145v1M468 151v1M468 449v1M468 455v1M468 461v1M468 467v1M469 139v1M469 144v1M469 150v1M469 214v1M469 450v1M469 456v1M469 462v1M470 138v1M470 149v1M470 154v1M470 451v1M470 457v1M470 463v1M471 137v1M471 148v1M471 153v1M471 213v1M471 452v1M471 458v1M471 464v1M472 136v1M472 142v1M472 147v1M472 442v1M472 459v1M473 141v1M473 443v1M473 460v1M474 140v1M474 151v1M474 439v1M474 444v1M474 454v1M475 139v1M475 145v1M475 150v1M475 160v1M475 440v1M475 445v1M475 455v1M476 144v1M476 149v1M476 159v1M476 446v1M476 456v1M477 143v1M477 148v1M477 436v1M477 457v1M478 142v1M478 163v1M478 437v1M478 442v1M479 157v1M479 433v1M479 443v1M479 448v1M480 146v1M480 156v1M480 166v1M480 444v1M480 449v1M481 155v1M481 161v1M481 439v1M481 445v1M481 450v1M482 154v1M482 160v1M482 169v1M482 435v1M482 440v1M482 451v1M483 164v1M483 436v1M483 441v1M484 163v1M484 427v1M484 442v1M484 447v1M485 152v1M485 158v1M485 167v1M486 157v1M486 424v1M486 438v1M487 161v1M487 176v1M487 429v1M487 439v1M487 444v1M488 160v1M488 165v1M488 420v1M488 430v1M489 179v1M489 426v1M490 174v1M490 417v1M490 441v1M491 163v1M491 173v1M491 182v1M491 422v1M491 432v1M492 177v1M492 433v1M493 186v1M494 161v1M494 171v1M494 424v1M494 429v1M495 170v1M495 420v1M496 179v1M496 407v1M497 174v1M497 193v1M497 426v1M497 431v1M498 183v1M498 403v1M499 196v1M499 413v1M500 172v1M500 400v1M501 200v1M502 190v1M502 424v1M503 406v1M505 389v1M506 210v1M506 417v1M507 385v1M508 214v1M509 218v1M511 406v1M513 229v1M514 197v1M515 398v1M516 395v1M518 391v1M520 387v1M524 375v1M526 228v1"/></g>
<g stroke="#ff0000"><path transform="translate(0,.5)" d="M145 74h3M155 74h3M746 107h6M746 113h6M749 148h3M293 160h2M299 165h2M301 167h2M303 169h2M305 170h2M307 172h2M309 174h2M313 178h2M315 179h2M322 186h2M323 187h2M745 187h2M748 187h2M747 188h2M750 188h2M745 192h2M748 192h2M747 193h2M750 193h2M332 195h2M333 196h2M335 198h2M341 203h2M343 205h2M345 207h2M351 212h2M353 214h2M355 216h2M361 221h2M363 223h2M365 225h2M370 229h2M371 230h2M373 232h2M375 234h2M747 236h3M745 237h2M750 237h2M380 238h2M381 239h2M383 241h2M385 243h2M745 243h2M750 243h2M747 244h3M467 246h2M390 247h2M391 248h2M393 250h2M395 252h2M399 255h2M401 257h2M466 258h15M403 259h2M405 261h2M474 262h5M407 263h2M472 263h2M479 263h2M409 264h2M411 266h2M413 268h2M415 270h2M417 272h3M565 272h5M419 273h2M568 273h2M421 275h2M750 276h3M423 277h2M472 277h2M479 277h2M751 277h2M474 278h5M425 279h2M746 279h2M427 281h3M429 282h2M431 284h2M746 284h2M433 286h2M745 287h2M435 288h2M437 290h3M439 291h2M441 293h2M745 293h8M440 297h2M434 303h2M428 309h2M422 315h2M416 321h2M410 327h2M404 333h2M398 339h2M392 345h2M386 351h2M380 357h2M374 363h2M368 369h2M143 374h6M147 375h2M135 380h5M140 381h2M135 390h5M184 527h5"/><path transform="translate(.5,0)" d="M132 383v5M133 382v1M133 388v1M134 381v1M134 389v1M140 389v1M141 382v1M141 388v1M142 380v1M142 383v5M143 76v3M143 379v1M144 75v1M144 79v1M144 378v1M145 80v1M145 377v1M146 376v1M148 75v1M148 376v4M149 76v3M149 299v1M150 79v4M151 83v8M152 79v4M153 76v3M154 75v1M155 299v1M157 80v1M157 297v1M157 301v1M158 75v1M158 79v1M159 76v3M159 303v1M160 294v1M161 305v1M162 291v1M163 307v1M165 288v1M165 309v1M167 311v1M167 368v1M168 285v1M169 313v1M170 315v1M171 282v1M172 317v1M174 279v1M174 319v1M176 321v1M177 276v1M178 323v1M178 539v1M179 273v1M179 540v1M180 325v1M180 531v5M180 541v1M181 530v1M181 536v1M181 540v1M182 270v1M182 327v1M182 529v1M182 537v3M183 528v1M184 329v1M185 267v1M186 331v1M188 264v1M188 333v1M189 528v1M190 335v1M190 529v1M190 537v3M191 261v1M191 530v1M191 536v1M191 540v1M192 337v1M192 531v5M192 541v1M193 258v1M193 542v1M194 339v1M194 543v1M196 255v1M196 341v1M197 343v1M199 252v1M199 345v1M201 347v1M202 249v1M203 349v1M205 246v1M205 351v1M207 243v1M207 353v1M209 355v1M210 240v1M211 357v1M213 237v1M213 359v1M215 361v1M216 234v1M217 363v1M219 231v1M219 365v1M221 367v1M222 228v1M223 369v1M224 225v1M225 371v1M226 373v1M227 222v1M228 375v1M230 219v1M230 377v1M232 379v1M233 216v1M234 381v1M236 213v1M236 383v1M238 210v1M238 385v1M240 387v1M241 207v1M242 389v1M244 204v1M244 391v1M246 393v1M247 201v1M248 395v1M250 198v1M250 397v1M252 195v1M252 399v1M253 401v1M255 192v1M255 403v1M257 405v1M258 189v1M259 407v1M261 186v1M261 409v1M263 411v1M264 183v1M265 413v1M267 180v1M267 415v1M269 177v1M269 417v1M271 419v1M272 174v1M273 421v1M275 171v1M275 423v1M277 425v1M278 168v1M279 427v1M280 429v1M281 165v1M282 431v1M283 162v1M284 433v1M286 159v1M286 435v1M288 437v1M289 156v1M290 157v1M290 439v1M291 158v1M292 159v1M292 441v1M295 161v1M295 442v1M296 162v1M296 441v1M297 163v1M297 440v1M298 164v1M299 438v1M300 166v1M301 436v1M302 168v1M302 435v1M303 434v1M305 432v1M306 171v1M307 430v1M308 173v1M308 429v1M309 428v1M310 175v1M311 176v1M311 426v1M312 175v1M312 177v1M313 424v1M314 177v1M314 423v1M315 422v1M316 180v1M317 181v1M317 420v1M318 180v1M318 182v1M319 183v1M319 418v1M320 182v1M320 184v1M320 417v1M321 185v1M321 416v1M322 184v1M323 414v1M324 185v1M325 188v1M325 412v1M326 187v1M326 189v1M326 411v1M327 190v1M327 410v1M328 189v1M328 191v1M329 192v1M329 408v1M330 190v1M330 193v1M331 194v1M331 406v1M332 192v1M332 405v1M333 404v1M334 194v1M335 197v1M335 402v1M336 195v1M337 199v1M337 400v1M338 197v1M338 200v1M338 399v1M339 201v1M339 398v1M340 199v1M340 202v1M341 396v1M342 200v1M343 204v1M343 394v1M344 202v1M344 393v1M345 206v1M345 392v1M346 204v1M347 208v1M347 390v1M348 205v1M348 209v1M349 210v1M349 388v1M350 207v1M350 211v1M350 387v1M351 386v1M352 209v1M353 213v1M353 384v1M354 210v1M355 215v1M355 382v1M356 212v1M356 381v1M357 217v1M358 214v1M358 218v1M359 219v1M359 378v1M360 215v1M360 220v1M361 376v1M362 217v1M362 375v1M363 222v1M363 374v1M364 219v1M365 224v1M365 372v1M366 220v1M367 226v1M367 370v1M368 222v1M368 227v1M369 228v1M370 224v1M371 366v2M372 225v1M373 231v1M373 365v1M374 227v1M375 233v1M376 229v1M377 235v1M377 360v2M378 230v1M378 236v1M379 237v1M379 359v1M380 232v1M382 234v1M383 240v1M383 354v2M384 235v1M385 242v1M385 353v1M386 237v1M387 244v1M388 239v1M388 245v1M389 246v1M389 348v2M390 240v1M391 347v1M392 242v1M393 249v1M394 244v1M395 251v1M395 342v2M396 246v1M397 253v1M397 341v1M398 247v1M398 254v1M400 249v1M401 256v1M401 336v2M402 251v1M403 258v1M403 335v1M404 252v1M405 260v1M406 254v1M407 262v1M407 330v2M408 256v1M409 329v1M410 257v1M411 265v1M412 259v1M413 267v1M413 324v2M414 261v1M415 269v1M415 323v1M416 262v1M417 271v1M418 264v1M419 318v2M420 266v1M421 274v1M421 317v1M422 267v1M423 276v1M424 269v1M425 278v1M425 312v2M426 271v1M427 280v1M427 311v1M428 272v1M430 274v1M431 283v1M431 306v2M432 276v1M433 285v1M433 305v1M434 277v1M435 287v1M436 279v1M437 289v1M437 300v2M438 281v1M439 299v1M440 282v1M441 292v1M442 255v1M448 283v1M466 257v1M467 255v2M468 253v2M468 268v5M469 247v1M469 251v2M469 266v2M469 273v2M470 248v3M470 265v1M470 275v1M471 264v1M471 276v1M476 246v12M476 259v2M476 270v1M477 245v1M478 244v1M481 264v1M481 276v1M482 265v1M482 275v1M483 266v2M483 273v2M484 268v5M553 288v1M554 287v1M555 278v1M555 286v1M556 279v1M556 285v1M557 280v1M557 284v1M558 281v1M558 283v1M559 282v1M560 281v1M560 283v1M561 280v1M561 284v1M562 279v1M562 285v1M563 278v1M563 286v1M564 277v1M565 276v1M566 275v1M567 274v1M569 274v3M744 146v1M744 189v1M744 194v1M744 239v3M744 281v2M745 106v1M745 114v1M745 147v7M745 188v1M745 193v1M745 238v1M745 242v1M745 280v1M745 283v1M745 292v1M746 146v1M746 186v1M746 191v1M746 290v2M747 108v5M747 147v7M747 189v1M747 194v1M747 288v2M748 146v1M748 240v1M748 280v1M748 283v1M749 147v1M749 149v4M749 154v1M749 186v1M749 191v1M749 279v1M749 281v2M750 108v5M750 153v1M750 189v1M750 194v1M750 278v1M750 287v6M750 294v1M751 147v1M751 149v4M751 154v1M751 187v1M751 192v1M751 238v1M751 242v1M751 286v1M752 106v1M752 114v1M752 186v1M752 191v1M752 239v3M752 278v1"/></g>
<g stroke="#00ff00"><path transform="translate(0,.5)" d="M407 56h2M413 56h2M410 60h2M416 60h2M407 66h2M413 66h2M410 70h2M416 70h2M282 118h9M285 124h3M747 126h3M285 128h3M750 166h3M751 167h2M744 210h9M747 257h3M747 261h3M746 263h5M747 266h3M747 270h3M746 272h5M477 301h5M477 309h5M746 309h5M33 312h11M747 312h3M475 313h9M33 324h11M442 397h5M442 405h5M440 409h9M445 512h5M439 518h7M449 518h7M439 522h17"/><path transform="translate(.5,0)" d="M31 310v1M31 326v1M32 311v1M32 325v1M35 313v11M41 313v11M44 311v1M44 325v1M45 310v1M45 326v1M173 366v1M174 362v1M175 366v1M176 358v1M177 366v1M179 354v1M179 367v1M181 350v1M181 367v1M183 346v1M183 367v1M185 342v1M185 367v1M187 367v1M188 338v1M189 367v1M190 334v1M191 367v1M192 330v1M193 368v1M194 326v1M195 368v1M197 322v1M197 368v1M199 318v1M199 368v1M201 314v1M201 368v1M203 310v1M203 368v1M205 306v1M205 368v1M207 369v1M208 302v1M209 369v1M210 298v1M211 369v1M212 294v1M213 369v1M214 290v1M215 369v1M217 286v1M217 369v1M219 282v1M219 369v1M221 278v1M221 370v1M223 274v1M223 370v1M225 270v1M225 370v1M227 370v1M228 266v1M229 370v1M230 262v1M231 370v1M232 258v1M233 371v1M234 254v1M235 371v1M237 250v1M237 371v1M239 246v1M239 371v1M241 242v1M241 371v1M243 238v1M243 371v1M245 371v1M246 234v1M247 372v1M248 230v1M249 372v1M250 226v1M251 372v1M252 222v1M253 372v1M254 218v1M255 372v1M257 214v1M257 372v1M259 210v1M259 372v1M261 206v1M261 373v1M263 202v1M263 373v1M265 373v1M266 198v1M267 373v1M268 194v1M269 373v1M270 190v1M271 373v1M272 186v1M273 373v1M275 182v1M275 374v1M277 178v1M277 374v1M279 174v1M279 374v1M280 112v1M280 122v1M281 113v1M281 121v1M281 170v1M281 374v1M282 114v4M282 119v2M283 166v1M283 374v1M284 125v3M285 374v1M286 116v2M286 119v5M286 162v1M287 375v1M288 125v3M288 158v1M289 150v1M289 375v1M290 114v4M290 119v2M291 113v1M291 121v1M291 375v1M292 112v1M292 122v1M293 375v1M295 375v1M297 375v1M299 375v1M301 376v1M303 376v1M305 376v1M307 376v1M309 376v1M311 376v1M313 376v1M315 377v1M317 377v1M319 377v1M321 377v1M323 377v1M325 377v1M327 377v1M329 378v1M331 378v1M333 378v1M335 378v1M337 378v1M339 378v1M341 379v1M343 379v1M345 379v1M347 379v1M349 379v1M351 379v1M353 379v1M355 380v1M357 380v1M359 380v1M361 380v1M363 380v1M365 380v1M367 380v1M369 381v1M371 381v1M373 381v1M375 381v1M377 381v1M379 381v1M381 381v1M383 382v1M385 382v1M387 382v1M389 382v1M391 382v1M393 382v1M395 383v1M397 383v1M399 383v1M401 383v1M403 383v1M404 61v1M404 71v1M405 59v2M405 69v2M405 383v1M406 58v1M406 68v1M407 57v1M407 67v1M407 383v1M408 55v1M408 65v1M409 57v3M409 67v3M409 384v1M410 61v1M410 71v1M411 59v1M411 69v1M411 384v1M412 58v1M412 68v1M413 57v1M413 67v1M413 384v1M414 55v1M414 65v1M415 57v3M415 67v3M415 384v1M416 61v1M416 71v1M417 59v1M417 69v1M418 58v1M418 68v1M419 56v2M419 66v2M420 55v1M420 65v1M420 387v1M440 399v5M441 398v1M441 404v1M443 514v3M444 406v3M444 410v4M444 513v1M444 517v1M447 398v1M447 404v1M448 399v5M449 295v1M450 513v1M450 517v1M451 514v3M475 299v1M475 303v5M476 300v1M476 302v1M476 308v1M479 310v3M479 314v2M482 300v1M482 302v1M482 308v1M483 299v1M483 303v5M744 132v1M744 174v1M744 206v1M744 214v1M745 128v3M745 133v1M745 169v1M745 173v1M745 207v1M745 213v1M745 306v1M745 311v1M746 127v1M746 131v2M746 170v1M746 172v1M746 208v2M746 211v2M746 256v1M746 258v3M746 267v3M746 307v2M746 310v1M747 171v1M747 313v1M748 170v1M748 172v1M748 262v1M748 264v1M748 271v1M748 273v2M748 308v1M748 310v2M748 314v1M749 169v1M749 173v1M749 313v1M750 127v1M750 131v2M750 168v1M750 208v2M750 211v2M750 256v1M750 258v3M750 267v3M750 307v2M750 310v1M751 128v3M751 133v1M751 207v1M751 213v1M751 306v1M751 311v1M752 134v1M752 168v1M752 206v1M752 214v1"/></g>
<g stroke="#ffff00"><path transform="translate(0,.5)" d="M747 117h3M745 118h2M750 118h2M745 120h2M750 121h2M745 123h2M750 123h2M747 124h3M520 143h3M509 144h2M516 145h3M520 149h3M750 164h2M59 181h2M66 181h2M61 182h5M59 183h2M66 183h2M59 193h2M66 193h2M61 194h5M745 197h2M748 197h2M747 198h2M750 198h2M745 202h2M748 202h2M747 203h2M750 203h2M745 297h5M749 299h2M747 300h2M286 473h9M294 477h3M290 479h3M323 556h2M320 558h2"/><path transform="translate(.5,0)" d="M57 178v1M57 186v5M58 179v2M58 184v2M58 191v2M68 179v2M68 184v2M68 191v2M69 178v1M69 186v5M290 471v2M290 474v5M290 480v6M293 449v1M293 478v1M296 483v3M297 478v1M297 482v1M297 486v1M298 479v3M298 487v1M310 553v1M311 554v1M312 555v13M313 554v1M314 553v1M315 554v1M316 555v13M317 554v1M318 553v1M319 554v1M320 555v3M320 559v7M320 569v1M321 566v1M321 568v1M322 557v1M322 567v1M323 566v1M323 568v1M324 555v1M324 557v9M324 569v1M333 153v1M436 256v2M442 284v1M442 286v3M443 290v1M443 292v4M508 145v1M510 143v1M510 145v7M511 152v1M512 153v5M513 152v1M514 147v5M515 146v1M516 143v2M517 146v1M518 147v1M519 144v1M519 148v1M521 150v1M522 151v1M522 159v1M523 144v1M523 148v1M523 152v1M523 158v1M524 145v3M524 153v5M744 119v1M744 121v2M744 156v1M744 199v1M744 204v1M745 157v7M745 198v1M745 203v1M746 156v1M746 196v1M746 201v1M747 121v2M747 157v7M747 199v1M747 204v1M747 296v1M747 298v2M747 301v3M748 156v1M749 119v2M749 157v7M749 196v1M749 201v1M750 199v1M750 204v1M750 302v2M751 197v1M751 202v1M751 300v2M751 304v1M752 119v2M752 122v1M752 162v2M752 196v1M752 201v1"/></g>
<g stroke="#0000ff"><path transform="translate(0,.5)" d="M272 37h17M356 125h3M361 125h5M368 125h3M359 130h2M366 130h2M361 131h5M359 135h9M747 136h3M750 176h2M744 177h2M748 177h2M750 179h2M747 218h3M747 224h3M465 226h3M465 230h3M462 233h2M469 233h2M464 234h5M462 238h9M746 246h3M749 247h2M749 253h2M746 254h3M474 281h5M479 282h2M479 296h2M474 297h5M744 317h2M747 317h3M751 317h2M747 320h3M746 322h5M747 330h3M746 332h5M541 416h3M539 420h2M80 440h5M77 441h3M86 442h3M76 446h3M86 448h3M76 452h3M85 453h3M80 454h5"/><path transform="translate(.5,0)" d="M74 444v1M74 448v3M75 443v1M75 447v1M75 451v1M76 442v1M79 447v1M79 451v1M79 453v1M80 448v3M84 444v3M85 441v1M85 443v1M85 447v1M88 452v1M89 443v1M89 447v1M89 451v1M90 444v3M90 450v1M272 29v1M272 45v1M273 30v1M273 44v1M274 31v1M274 43v1M275 32v2M275 41v2M276 34v3M276 38v3M284 34v3M284 38v3M285 32v2M285 41v2M286 31v1M286 43v1M287 30v1M287 44v1M288 29v1M288 45v1M289 159v1M289 163v1M289 167v1M289 171v1M289 175v1M289 179v1M289 183v1M290 187v1M290 191v1M290 195v1M290 199v1M290 203v1M290 207v1M290 211v1M290 215v1M290 219v1M290 223v1M290 227v1M290 231v1M290 235v1M290 239v1M291 243v1M291 247v1M291 251v1M291 255v1M291 259v1M291 263v1M291 267v1M291 271v1M291 275v1M291 279v1M291 283v1M291 287v1M291 291v1M291 295v1M291 299v1M292 303v1M292 307v1M292 311v1M292 315v1M292 319v1M292 323v1M292 327v1M292 331v1M292 335v1M292 339v1M292 343v1M292 347v1M292 351v1M292 355v1M293 359v1M293 363v1M293 367v1M293 371v1M293 379v1M293 383v1M293 387v1M293 391v1M293 395v1M293 399v1M293 403v1M293 407v1M293 411v1M294 415v1M294 419v1M294 423v1M294 427v1M294 431v1M294 435v1M294 439v1M352 159v1M357 123v2M357 126v2M358 128v2M363 123v2M363 126v5M363 132v3M363 136v4M368 128v2M369 123v2M369 126v2M442 254v1M449 293v1M460 226v5M461 231v2M464 227v3M466 235v3M466 239v4M468 227v3M471 231v2M472 226v5M472 283v1M472 295v1M473 282v1M473 284v1M473 294v1M473 296v1M474 285v1M474 293v1M475 286v2M475 291v2M476 288v3M481 283v1M481 295v1M482 284v1M482 294v1M483 285v2M483 292v2M484 287v5M527 404v1M528 405v1M529 406v13M530 405v1M531 404v1M532 405v1M533 406v13M534 405v1M535 404v1M536 405v1M537 406v13M538 419v1M541 419v1M542 415v1M542 417v2M744 142v1M745 138v3M745 143v1M745 176v1M745 178v3M745 216v1M745 220v3M745 247v1M745 253v1M745 316v1M745 318v1M745 326v3M746 137v1M746 141v2M746 181v3M746 217v1M746 219v1M746 223v1M746 248v1M746 252v1M746 319v1M746 329v1M747 178v3M747 249v3M747 327v1M748 176v1M748 316v1M748 318v2M748 321v1M748 323v2M748 326v1M748 328v1M748 331v1M748 333v2M749 178v1M749 327v1M750 137v1M750 141v2M750 217v1M750 219v1M750 223v1M750 248v1M750 252v1M750 319v1M750 329v1M751 138v3M751 143v1M751 180v1M751 184v1M751 216v1M751 220v3M751 249v3M751 316v1M751 318v1M751 326v3M752 144v1M752 177v2M752 181v3"/></g>
<g stroke="#00ffff"><path transform="translate(0,.5)" d="M356 174h2M359 178h2M362 182h2M365 186h2M368 190h2M371 194h2M173 367h2M176 369h2M178 370h2M181 372h2M184 374h2M186 375h2M189 377h2M192 379h2M195 381h2M197 382h2M200 384h2M203 386h2M205 387h2M208 389h2M211 391h2M214 393h2M216 394h2M219 396h2M222 398h2M224 399h2M227 401h2M230 403h2M233 405h2M235 406h2M238 408h2M241 410h2M243 411h2M246 413h2M249 415h2M251 416h2M254 418h2M257 420h2M260 422h2M262 423h2M265 425h2M268 427h2M270 428h2M273 430h2M276 432h2M279 434h2M281 435h2M284 437h2M287 439h2M289 440h2M292 442h2M294 443h2"/><path transform="translate(.5,0)" d="M172 366v1M175 368v1M180 371v1M183 373v1M188 376v1M191 378v1M194 380v1M199 383v1M202 385v1M207 388v1M210 390v1M213 392v1M218 395v1M221 397v1M226 400v1M229 402v1M232 404v1M237 407v1M240 409v1M245 412v1M248 414v1M253 417v1M256 419v1M259 421v1M264 424v1M267 426v1M272 429v1M275 431v1M278 433v1M283 436v1M286 438v1M291 441v1M297 442v1M299 441v1M301 440v1M303 439v1M305 438v1M307 437v1M309 436v1M311 435v1M313 434v1M315 433v1M317 432v1M319 431v1M321 430v1M323 429v1M325 428v1M327 427v1M329 426v1M331 425v1M333 424v1M335 423v1M337 422v1M339 421v1M341 420v1M343 419v1M345 418v1M347 417v1M349 416v1M351 166v1M351 415v1M352 168v1M353 414v1M354 170v1M355 172v1M355 413v1M357 412v1M359 176v1M359 411v1M361 410v1M362 180v1M363 409v1M365 184v1M365 408v1M367 407v1M368 188v1M369 406v1M371 192v1M371 405v1M373 404v1M374 196v1M374 198v1M375 404v1M376 198v1M377 200v1M377 202v1M377 403v1M379 202v1M379 402v1M380 204v1M380 206v1M381 401v1M382 206v1M382 210v1M383 208v1M383 400v1M385 210v1M385 214v1M385 399v1M386 212v1M387 398v1M388 214v1M388 218v1M389 216v1M389 397v1M391 218v1M391 222v1M391 396v1M393 220v1M393 395v1M394 222v1M394 226v1M395 394v1M396 224v1M397 226v1M397 230v1M397 393v1M399 228v1M399 392v1M400 230v1M400 234v1M401 391v1M402 232v1M403 234v1M403 238v1M403 390v1M405 236v1M405 389v1M406 238v1M406 242v1M407 388v1M408 240v1M408 246v1M409 387v1M410 242v1M411 244v1M411 250v1M411 386v1M413 246v1M413 385v1M414 248v1M414 254v1M416 250v1M417 252v1M417 258v1M419 254v1M420 256v1M420 262v1M422 258v1M423 260v1M423 266v1M425 262v1M426 270v1M427 264v1M428 266v1M429 274v1M430 268v1M431 270v1M431 278v1M433 272v1M434 274v1M434 282v1M436 276v1M437 278v1M437 286v1M439 280v1M440 290v1"/></g>
<g stroke="#007f7f"><path transform="translate(0,.5)" d="M321 113h5M317 125h3M327 125h3M747 336h3M745 342h2M750 342h2"/><path transform="translate(.5,0)" d="M315 127v1M316 126v1M316 128v1M317 117v5M317 129v1M318 116v1M318 122v1M318 128v1M319 115v1M319 123v2M319 126v2M320 114v1M322 151v1M326 114v1M327 115v1M327 123v2M327 126v2M328 116v1M328 122v1M328 128v1M329 117v5M329 129v1M330 126v1M330 128v1M331 127v1M744 343v1M745 338v3M745 344v1M746 337v1M746 341v1M746 343v1M750 337v1M750 341v1M750 343v1M751 338v3M751 344v1M752 343v1"/></g>
<g stroke="#ff00ff"><path transform="translate(0,.5)" d=""/><path transform="translate(.5,0)" d=""/></g>
<text class="h" x="95.5" y="352" fill="#ff0000" stroke="none" text-anchor="middle" filter="url(#th)">1</text>
<text class="h" x="136.5" y="436" fill="#ffff00" stroke="none" text-anchor="middle" filter="url(#th)">2</text>
<text class="h" x="207.5" y="492" fill="#00ff00" stroke="none" text-anchor="middle" filter="url(#th)">3</text>
<text class="h" x="309.5" y="514" fill="#0000ff" stroke="none" text-anchor="middle" filter="url(#th)">4</text>
<text class="h" x="427.5" y="470" fill="#ff0000" stroke="none" text-anchor="middle" filter="url(#th)">5</text>
<text class="h" x="500.5" y="365" fill="#ffff00" stroke="none" text-anchor="middle" filter="url(#th)">6</text>
<text class="h" x="503.5" y="256" fill="#00ff00" stroke="none" text-anchor="middle" filter="url(#th)">7</text>
<text class="h" x="462.5" y="172" fill="#0000ff" stroke="none" text-anchor="middle" filter="url(#th)">8</text>
<text class="h" x="391.5" y="116" fill="#ff0000" stroke="none" text-anchor="middle" filter="url(#th)">9</text>
<text class="h" x="290" y="94" fill="#ffff00" stroke="none" text-anchor="middle" filter="url(#th)">10</text>
<text class="h" x="172" y="138" fill="#00ff00" stroke="none" text-anchor="middle" filter="url(#th)">11</text>
<text class="h" x="99" y="243" fill="#0000ff" stroke="none" text-anchor="middle" filter="url(#th)">12</text>
<text transform="translate(333.2,134) scale(0.5,1)" fill="#ffff00" stroke="none" class="g" filter="url(#tm)">M<tspan dx="2.6">C</tspan></text>
<text transform="translate(110.5,308) scale(0.46,1)" fill="#ff0000" stroke="none" class="g" filter="url(#tg)">Asc</text>
</svg>
<div class="sb">
<div><span style="left:0px;color:#ffffff">Astrolog 5.40</span></div>
<div><span style="left:0px;color:#bfbfbf">&quot;Anonymous&quot;</span></div>
<div><span style="left:0px;color:#bfbfbf">Sun December 9, 2007</span></div>
<div><span style="left:0px;color:#bfbfbf"> 5:11pm (ST <i>+</i>8:00 GMT)</span></div>
<div><span style="left:0px;color:#bfbfbf">&quot;Taiwan&quot;</span></div>
<div><span style="left:0px;color:#bfbfbf">114<i>°</i>06E 22<i>°</i>12N</span></div>
<div><span style="left:0px;color:#bfbfbf">Regiomontanus houses.</span></div>
<div><span style="left:0px;color:#bfbfbf">Tropical, Geocentric.</span></div>
<div><span style="left:0px;color:#bfbfbf">Julian Day = 2454443.8826</span></div>
<div></div>
<div><span style="left:0px;color:#ff0000"> 1st house: </span><span style="left:72px;color:#00ff00">10Gem42</span></div>
<div><span style="left:0px;color:#ffff00"> 2nd house: </span><span style="left:72px;color:#0000ff"> 7Can38</span></div>
<div><span style="left:0px;color:#00ff00"> 3rd house: </span><span style="left:72px;color:#ff0000"> 1Leo34</span></div>
<div><span style="left:0px;color:#0000ff"> 4th house: </span><span style="left:72px;color:#ff0000">27Leo23</span></div>
<div><span style="left:0px;color:#ff0000"> 5th house: </span><span style="left:72px;color:#ffff00">29Vir30</span></div>
<div><span style="left:0px;color:#ffff00"> 6th house: </span><span style="left:72px;color:#0000ff"> 6Sco55</span></div>
<div><span style="left:0px;color:#00ff00"> 7th house: </span><span style="left:72px;color:#ff0000">10Sag42</span></div>
<div><span style="left:0px;color:#0000ff"> 8th house: </span><span style="left:72px;color:#ffff00"> 7Cap38</span></div>
<div><span style="left:0px;color:#ff0000"> 9th house: </span><span style="left:72px;color:#00ff00"> 1Aqu34</span></div>
<div><span style="left:0px;color:#ffff00">10th house: </span><span style="left:72px;color:#00ff00">27Aqu23</span></div>
<div><span style="left:0px;color:#00ff00">11th house: </span><span style="left:72px;color:#0000ff">29Pis30</span></div>
<div><span style="left:0px;color:#0000ff">12th house: </span><span style="left:72px;color:#ffff00"> 6Tau55</span></div>
<div></div>
<div><span style="left:0px;color:#ff0000"> Sun: </span><span style="left:36px;color:#ff0000">16Sag54</span><span style="left:90px;color:#bfbfbf"><b>-</b> 0<i>°</i>00'</span></div>
<div><span style="left:0px;color:#0000ff">Moon: </span><span style="left:36px;color:#ff0000">13Sag00</span><span style="left:90px;color:#bfbfbf"><b>-</b> 4<i>°</i>54'</span></div>
<div><span style="left:0px;color:#00ff00">Merc: </span><span style="left:36px;color:#ff0000">12Sag20</span><span style="left:90px;color:#bfbfbf"><b>-</b> 0<i>°</i>33'</span></div>
<div><span style="left:0px;color:#00ff00">Venu: </span><span style="left:36px;color:#0000ff"> 4Sco29</span><span style="left:90px;color:#bfbfbf"><i>+</i> 2<i>°</i>18'</span></div>
<div><span style="left:0px;color:#ff0000">Mars: </span><span style="left:36px;color:#0000ff"> 8Can25</span><span style="left:78px;color:#ffffff">R</span><span style="left:90px;color:#bfbfbf"><i>+</i> 2<i>°</i>47'</span></div>
<div><span style="left:0px;color:#ff0000">Jupi: </span><span style="left:36px;color:#ff0000">27Sag52</span><span style="left:90px;color:#bfbfbf"><i>+</i> 0<i>°</i>12'</span></div>
<div><span style="left:0px;color:#ffff00">Satu: </span><span style="left:36px;color:#ffff00"> 8Vir24</span><span style="left:90px;color:#bfbfbf"><i>+</i> 1<i>°</i>35'</span></div>
<div><span style="left:0px;color:#00ff00">Uran: </span><span style="left:36px;color:#0000ff">14Pis52</span><span style="left:90px;color:#bfbfbf"><b>-</b> 0<i>°</i>46'</span></div>
<div><span style="left:0px;color:#0000ff">Nept: </span><span style="left:36px;color:#00ff00">19Aqu40</span><span style="left:90px;color:#bfbfbf"><b>-</b> 0<i>°</i>17'</span></div>
<div><span style="left:0px;color:#0000ff">Plut: </span><span style="left:36px;color:#ff0000">28Sag18</span><span style="left:90px;color:#bfbfbf"><i>+</i> 6<i>°</i>19'</span></div>
<div><span style="left:0px;color:#007f7f">Node: </span><span style="left:36px;color:#0000ff"> 1Pis32</span><span style="left:78px;color:#ffffff">R</span><span style="left:90px;color:#bfbfbf"><i>+</i> 0<i>°</i>00'</span></div>
<div></div>
<div><span style="left:0px;color:#bfbfbf">Fire: 5, Earth: 1,</span></div>
<div><span style="left:0px;color:#bfbfbf">Air : 3, Water: 4</span></div>
<div><span style="left:0px;color:#bfbfbf">Car: 1, Fix: 3, Mut: 9</span></div>
<div><span style="left:0px;color:#bfbfbf">Yang: 8, Yin: 5</span></div>
<div><span style="left:0px;color:#bfbfbf">M: 8, N: 3, A: 3, D: 8</span></div>
<div><span style="left:0px;color:#bfbfbf">Ang: 8, Suc: 2, Cad: 1</span></div>
<div><span style="left:0px;color:#bfbfbf">Learn: 3, Share: 10</span></div>
</div></body></html>
